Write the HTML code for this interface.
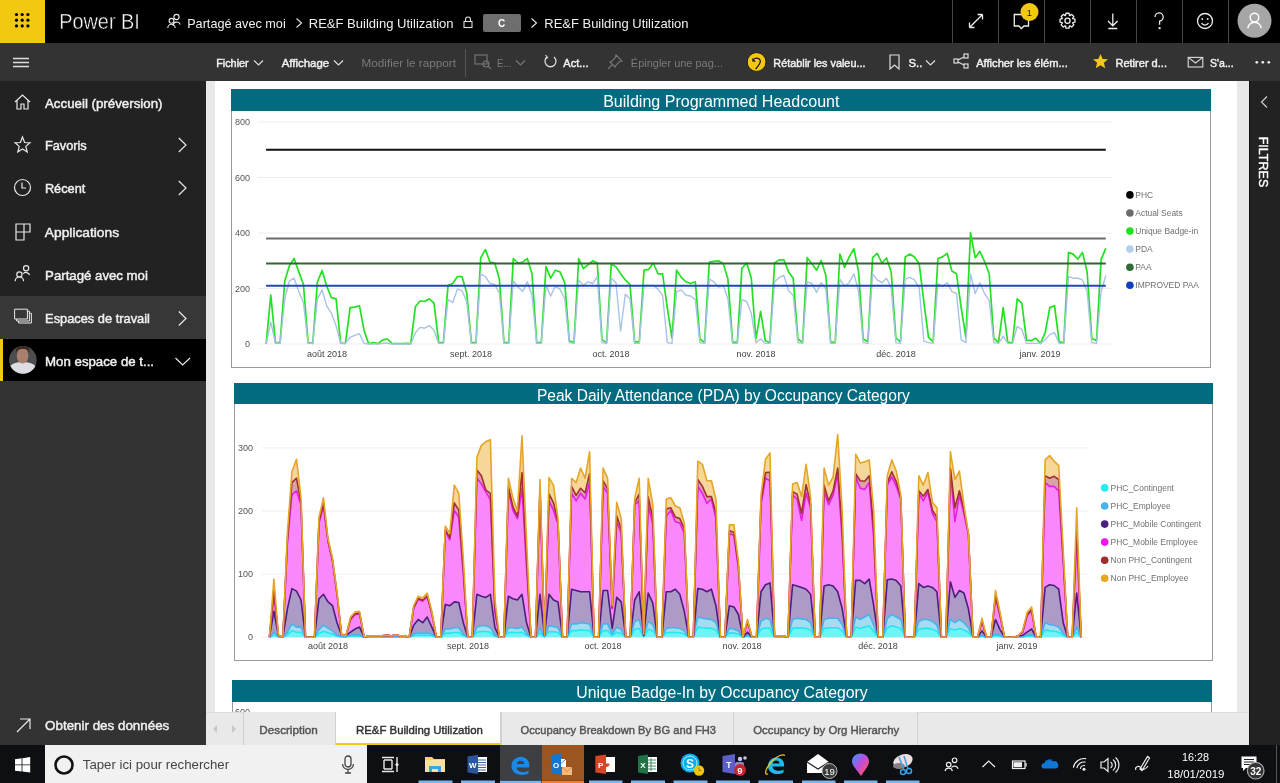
<!DOCTYPE html>
<html lang="fr"><head><meta charset="utf-8"><title>Power BI</title>
<style>
*{box-sizing:border-box;margin:0;padding:0}
html,body{width:1280px;height:783px;overflow:hidden;background:#fff;font-family:"Liberation Sans",sans-serif}
.abs{position:absolute}
#top{left:0;top:0;width:1280px;height:43px;background:#000}
#tb{left:0;top:43px;width:1280px;height:38px;background:#333333}
#nav{left:0;top:81px;width:206px;height:664px;background:#333333}
#navtop{left:0;top:81px;width:206px;height:215px;background:#222222}
.w{color:#fff;white-space:nowrap}
.t14{font-size:14px}
.ni{position:absolute;left:45px;font-size:13.5px;color:#f2f2f2;font-weight:bold;white-space:nowrap;letter-spacing:-0.1px}
.tbt{position:absolute;top:55px;font-size:12.5px;color:#f0f0f0;white-space:nowrap;font-weight:bold}
.tbd{color:#7a7a7a}
.sep{position:absolute;top:0;width:1px;height:43px;background:#474747}
svg text{font-family:"Liberation Sans",sans-serif}
.ax{font-size:9px;fill:#555}
.ax2{font-size:9px;fill:#444}
.leg{font-size:8.45px;fill:#707070}
.hdr{position:absolute;background:#026b80;color:#fff;font-size:16px;text-align:center;white-space:nowrap}
.tab{position:absolute;top:712px;height:33px;font-size:12.5px;font-weight:bold;color:#555;line-height:33px;text-align:center;border-right:1px solid #d0d0d0;background:#e9e9e9;white-space:nowrap}
</style></head><body>
<!-- top bar -->
<div id="top" class="abs"></div>
<div class="abs" style="left:0;top:0;width:45px;height:43px;background:#f2c811"></div>
<svg class="abs" style="left:0;top:0" width="45" height="43">
 <g fill="#000">
 <circle cx="16.5" cy="14.5" r="1.6"/><circle cx="22.2" cy="14.5" r="1.6"/><circle cx="27.9" cy="14.5" r="1.6"/>
 <circle cx="16.5" cy="20.2" r="1.6"/><circle cx="22.2" cy="20.2" r="1.6"/><circle cx="27.9" cy="20.2" r="1.6"/>
 <circle cx="16.5" cy="25.9" r="1.6"/><circle cx="22.2" cy="25.9" r="1.6"/><circle cx="27.9" cy="25.9" r="1.6"/>
 </g></svg>

<svg class="abs" style="left:166px;top:13px" width="16" height="16"><g fill="none" stroke="#eee" stroke-width="1.1"><circle cx="10.5" cy="4" r="2.6"/><path d="M7.2 13 a3.6 3.6 0 0 1 7 -1.5"/><circle cx="5.5" cy="7.8" r="2.4"/><path d="M1.8 15 a3.7 3.7 0 0 1 7.4 0"/></g></svg>

<svg class="abs" style="left:294px;top:17px" width="10" height="12"><path d="M2.5 1.5 L7.5 6 L2.5 10.5" fill="none" stroke="#ddd" stroke-width="1.2"/></svg>

<svg class="abs" style="left:462px;top:15px" width="12" height="14"><path d="M3.5 6.5 V4.5 a2.5 2.5 0 0 1 5 0 V6.5" fill="none" stroke="#ddd" stroke-width="1.1"/><rect x="2" y="6.5" width="8" height="6" fill="none" stroke="#ddd" stroke-width="1.1"/></svg>
<div class="abs" style="left:483px;top:13.5px;width:38px;height:18px;background:#6e6e6e;border-radius:2px"></div>
<svg class="abs" style="left:529px;top:17px" width="10" height="12"><path d="M2.5 1.5 L7.5 6 L2.5 10.5" fill="none" stroke="#ddd" stroke-width="1.2"/></svg>

<div class="sep" style="left:952px"></div><div class="sep" style="left:998px"></div><div class="sep" style="left:1044px"></div><div class="sep" style="left:1090px"></div><div class="sep" style="left:1136px"></div><div class="sep" style="left:1182px"></div><div class="sep" style="left:1228px"></div>
<svg class="abs" style="left:952px;top:0;will-change:transform" width="328" height="43">
 <g fill="none" stroke="#eee" stroke-width="1.3">
  <path d="M969.5 27.5 L982.5 14.5 M969.5 27.5 V22.5 M969.5 27.5 H974.5 M982.5 14.5 H977.5 M982.5 14.5 V19.5" transform="translate(-952 0)"/>
  <path d="M62.3 14.5 H76.5 V26 H72 L69.4 28.5 L66.8 26 H62.3 Z"/>
  <path d="M120.74 18.73 L122.95 19.19 L122.95 22.21 L120.74 22.67 L120.60 23.01 L121.83 24.90 L119.70 27.03 L117.81 25.80 L117.47 25.94 L117.01 28.15 L113.99 28.15 L113.53 25.94 L113.19 25.80 L111.30 27.03 L109.17 24.90 L110.40 23.01 L110.26 22.67 L108.05 22.21 L108.05 19.19 L110.26 18.73 L110.40 18.39 L109.17 16.50 L111.30 14.37 L113.19 15.60 L113.53 15.46 L113.99 13.25 L117.01 13.25 L117.47 15.46 L117.81 15.60 L119.70 14.37 L121.83 16.50 L120.60 18.39 Z" stroke-linejoin="round"/><circle cx="115.5" cy="20.7" r="2.6"/>
  <path d="M160.8 13.5 V25.5 M156 21 L160.8 25.8 L165.6 21 M156.3 28.5 H165.3"/>
  <path d="M203 17 a4.1 4.1 0 1 1 4.6 4.1 V24.8" /><circle cx="207.6" cy="28.2" r="0.5" fill="#eee"/>
  <circle cx="253" cy="21" r="7.5"/><path d="M249.5 23 a4 4 0 0 0 7 0"/>
 </g>
 <g fill="#eee"><circle cx="250.3" cy="19" r="0.9"/><circle cx="255.7" cy="19" r="0.9"/></g>
 <circle cx="77.5" cy="12" r="9" fill="#f2c811"/>
 <text x="77.5" y="15.5" text-anchor="middle" font-size="9.5" fill="#222">1</text>
 <circle cx="302.5" cy="20.7" r="17" fill="#a6a6a6"/>
 <g fill="none" stroke="#fff" stroke-width="1.4"><circle cx="302.5" cy="17.6" r="4.3"/><path d="M296 28.3 a6.5 6 0 0 1 13 0"/></g>
</svg>

<!-- toolbar -->
<div id="tb" class="abs"></div>
<svg class="abs" style="left:12px;top:55.5px" width="18" height="14"><g stroke="#ddd" stroke-width="1.3"><path d="M1 2.5 H17 M1 6.5 H17 M1 10.5 H17"/></g></svg>
<svg class="abs" style="left:253px;top:59px" width="11" height="8"><path d="M1 1.5 L5.5 6 L10 1.5" fill="none" stroke="#ddd" stroke-width="1.2"/></svg>
<svg class="abs" style="left:333px;top:59px" width="11" height="8"><path d="M1 1.5 L5.5 6 L10 1.5" fill="none" stroke="#ddd" stroke-width="1.2"/></svg>
<div class="abs" style="left:465px;top:49px;width:1px;height:28px;background:#555"></div>
<svg class="abs" style="left:474px;top:54px" width="18" height="16"><g fill="none" stroke="#777" stroke-width="1.1"><rect x="1" y="1" width="12" height="9"/><circle cx="12" cy="10" r="3"/><path d="M14 12 L17 15"/></g></svg>
<svg class="abs" style="left:515px;top:59px" width="11" height="8"><path d="M1 1.5 L5.5 6 L10 1.5" fill="none" stroke="#777" stroke-width="1.2"/></svg>
<svg class="abs" style="left:543px;top:54px" width="15" height="15"><path d="M4 3 A5.5 5.5 0 1 0 11 3" fill="none" stroke="#ddd" stroke-width="1.3"/><path d="M2.5 1 L4.5 3.5 L2 5" fill="none" stroke="#ddd" stroke-width="1.2"/></svg>
<svg class="abs" style="left:607px;top:53px" width="17" height="17"><g fill="none" stroke="#777" stroke-width="1.1"><path d="M9 2 L15 8 L12 9 L9 12 L8 14 L3 9 L5 8 L8 5 Z"/><path d="M5.5 11.5 L1 16"/></g></svg>
<svg class="abs" style="left:746px;top:52px" width="21" height="21"><circle cx="10.6" cy="10" r="9.4" fill="#f2c811" stroke="#151515" stroke-width="0.9"/><path d="M7 7.6 C9.5 5.2 13.6 5.6 14.3 8.6 C14.9 11.2 12.3 14 9.6 17" fill="none" stroke="#1a1a1a" stroke-width="1.3"/><path d="M6.2 6 L6.4 9.8 L10 9.4 Z" fill="#1a1a1a"/></svg>
<svg class="abs" style="left:888px;top:54px" width="13" height="16"><path d="M2 1 H11 V15 L6.5 11 L2 15 Z" fill="none" stroke="#ddd" stroke-width="1.2"/></svg>
<svg class="abs" style="left:925px;top:59px" width="11" height="8"><path d="M1 1.5 L5.5 6 L10 1.5" fill="none" stroke="#ddd" stroke-width="1.2"/></svg>
<svg class="abs" style="left:953px;top:53px" width="17" height="17"><g fill="none" stroke="#ddd" stroke-width="1.2"><rect x="1" y="6" width="4" height="4"/><rect x="11" y="1" width="4" height="4"/><rect x="11" y="11" width="4" height="4"/><path d="M5 7 L11 4 M5 9 L11 12"/></g></svg>
<svg class="abs" style="left:1092px;top:53px" width="17" height="17"><path d="M8.5 1 L10.7 6 L16 6.3 L11.9 9.8 L13.2 15.2 L8.5 12.3 L3.8 15.2 L5.1 9.8 L1 6.3 L6.3 6 Z" fill="#f2c811"/></svg>
<svg class="abs" style="left:1187px;top:56px" width="17" height="13"><g fill="none" stroke="#ddd" stroke-width="1.1"><rect x="1.2" y="1.4" width="14.6" height="9.6"/><path d="M1.2 1.4 L8.5 7 L15.8 1.4"/></g></svg>
<svg class="abs" style="left:1254px;top:60px" width="18" height="5"><g fill="#eee"><circle cx="2.8" cy="2.3" r="1.35"/><circle cx="8.8" cy="2.3" r="1.35"/><circle cx="14.8" cy="2.3" r="1.35"/></g></svg>

<!-- left nav -->
<div id="nav" class="abs"></div>
<div id="navtop" class="abs"></div>
<div class="abs" style="left:0;top:296px;width:206px;height:43px;background:#373737"></div>
<div class="abs" style="left:0;top:339px;width:206px;height:42px;background:#000"></div>
<div class="abs" style="left:0;top:339px;width:3px;height:42px;background:#f2c811"></div>
<svg class="abs" style="left:0;top:81px" width="206" height="664">
 <g fill="none" stroke="#e8e8e8" stroke-width="1.2">
  <path d="M15 21 L22.5 14 L30 21 M17 19.5 V28 H21 V23 H24 V28 H28 V19.5"/>
  <path d="M22.5 56 L24.6 61.5 L30 61.8 L25.8 65.4 L27.2 71 L22.5 68 L17.8 71 L19.2 65.4 L15 61.8 L20.4 61.5 Z"/>
  <circle cx="22.5" cy="106.5" r="8"/><path d="M22 101.5 V107 H26"/>
  <path d="M16 143 H24 V159 H16 Z M16 151 H24 M24 143 H30 V151 H24"/>
  <circle cx="26.1" cy="187.2" r="2.6"/><path d="M23.2 192.6 a3.8 3.8 0 0 1 6.4 1.6"/><circle cx="19.4" cy="193.4" r="2.6"/><path d="M15.2 200.2 a4.2 4.2 0 0 1 8.4 0"/>
  <path d="M14.6 228.2 H27.4 V238 H14.6 Z M16.6 238 V240 H29.4 V230.2 H27.4 M18.6 240 V242 H31.4 V232.2 H29.4" stroke-width="1"/>
  <path d="M178.8 57 L186 64 L178.8 71"/>
  <path d="M178.8 100 L186 107 L178.8 114"/>
  <path d="M178.8 230.5 L186 237.5 L178.8 244.5"/>
  <path d="M175.5 277 L182.7 284 L190 277"/>
  <path d="M17 651 L30 638 M20 638 H30 V648"/>
 </g>
 <defs><clipPath id="avc"><circle cx="22.9" cy="278.9" r="13.8"/></clipPath></defs>
 <g clip-path="url(#avc)">
  <rect x="8" y="264" width="30" height="30" fill="#4d4d4f"/>
  <path d="M8 294 V287 C12 282 17 281 22.5 281 C28 281 33 282 38 287 V294 Z" fill="#dcdce2"/>
  <ellipse cx="22.6" cy="274.5" rx="5.8" ry="8" fill="#a8806d"/>
  <path d="M16 272 C15.5 266 19 264.5 23 264.5 C27 264.5 30 266.5 29.5 272 C28 268.5 26 268 23 268 C20 268 17.5 268.5 16 272 Z" fill="#3b2a22"/>
 </g>
</svg>

<!-- canvas -->
<div class="abs" style="left:206px;top:81px;width:1044px;height:631px;background:#e8e8e8"></div>
<div class="abs" style="left:215px;top:81px;width:1022px;height:631px;background:#fff"></div>
<!-- chart 1 -->
<div class="abs" style="left:231px;top:89px;width:980px;height:278.5px;border:1px solid #9a9a9a;background:#fff"></div>
<div class="hdr" style="left:231px;top:89px;width:980px;height:22px"></div>
<!-- chart 2 -->
<div class="abs" style="left:234px;top:383px;width:978.5px;height:278px;border:1px solid #9a9a9a;background:#fff"></div>
<div class="hdr" style="left:234px;top:383px;width:978.5px;height:21px"></div>
<!-- chart 3 -->
<div class="abs" style="left:232px;top:680px;width:980px;height:40px;border:1px solid #9a9a9a;background:#fff"></div>
<div class="hdr" style="left:232px;top:680px;width:980px;height:21.6px"></div>

<svg class="abs" style="left:0;top:0;will-change:transform" width="1280" height="712">
<line x1="258" y1="122" x2="1112" y2="122" stroke="#eeeeee" stroke-width="1"/>
<text x="250" y="125.2" text-anchor="end" class="ax">800</text>
<line x1="258" y1="177.5" x2="1112" y2="177.5" stroke="#eeeeee" stroke-width="1"/>
<text x="250" y="180.7" text-anchor="end" class="ax">600</text>
<line x1="258" y1="233" x2="1112" y2="233" stroke="#eeeeee" stroke-width="1"/>
<text x="250" y="236.2" text-anchor="end" class="ax">400</text>
<line x1="258" y1="288.5" x2="1112" y2="288.5" stroke="#eeeeee" stroke-width="1"/>
<text x="250" y="291.7" text-anchor="end" class="ax">200</text>
<line x1="258" y1="344" x2="1112" y2="344" stroke="#eeeeee" stroke-width="1"/>
<text x="250" y="347.2" text-anchor="end" class="ax">0</text>
<line x1="266.1" y1="149.7" x2="1105.8" y2="149.7" stroke="#111" stroke-width="2"/>
<line x1="266.1" y1="238.6" x2="1105.8" y2="238.6" stroke="#6a6a6a" stroke-width="2"/>
<polyline points="266.1,344 270.8,295.2 275.4,342.6 280.1,342.6 284.8,280.7 289.4,265.7 294.1,258.5 298.8,271.9 303.4,284.3 308.1,342.6 312.8,343.4 317.4,281.8 322.1,270.5 326.7,286 331.4,297.7 336.1,298.8 340.7,343.2 345.4,343.4 350.1,307.6 354.7,307.1 359.4,305.7 364.1,330.7 368.7,343.7 373.4,342.6 378.1,343.7 382.7,339.8 387.4,339 392.1,343.7 396.7,343.7 401.4,343.7 406.1,343.4 410.7,343.7 415.4,306.8 420,301 424.7,301.5 429.4,298.8 434,303.2 438.7,342.6 443.4,342.6 448,285.4 452.7,283.5 457.4,276.6 462,276.6 466.7,292.7 471.4,342.6 476,342.6 480.7,257.7 485.4,249.6 490,262.1 494.7,263 499.4,279.1 504,342.6 508.7,342.6 513.3,258.5 518,263 522.7,262.1 527.3,258.5 532,273.8 536.7,342.6 541.3,342.6 546,266.6 550.7,278.2 555.3,270.2 560,271.9 564.7,282.7 569.3,340.7 574,342.6 578.7,258.5 583.3,268.5 588,264.9 592.7,260.8 597.3,263 602,339.6 606.6,342.6 611.3,263.8 616,266.9 620.6,273.8 625.3,279.9 630,284.6 634.6,341.8 639.3,341.8 644,270.2 648.6,269.4 653.3,263 658,273.8 662.6,273.8 667.3,307.9 672,338.2 676.6,270.2 681.3,277.4 686,281.8 690.6,283.5 695.3,281.8 699.9,339 704.6,342.6 709.3,262.1 713.9,261.3 718.6,260.8 723.3,263.8 727.9,279.1 732.6,341.8 737.3,342.6 741.9,268.5 746.6,262.7 751.3,278.2 755.9,339 760.6,311.3 765.3,340.7 769.9,342.6 774.6,263 779.2,259.9 783.9,259.9 788.6,271.9 793.2,278.2 797.9,339 802.6,342.6 807.2,257.7 811.9,263.8 816.6,270.2 821.2,260.5 825.9,275.5 830.6,341.8 835.2,342.6 839.9,254.1 844.6,267.4 849.2,256.9 853.9,248.8 858.6,271.9 863.2,339 867.9,341.8 872.6,257.7 877.2,253.3 881.9,263 886.5,258 891.2,271.9 895.9,338.2 900.5,341.8 905.2,256.9 909.9,254.1 914.5,256.9 919.2,263.8 923.9,302.4 928.5,337.3 933.2,341.8 937.9,258.5 942.5,256.9 947.2,253.3 951.9,271 956.5,273.8 961.2,307.9 965.9,337.3 970.5,232.7 975.2,257.7 979.8,251.3 984.5,261.3 989.2,273.8 993.8,338.2 998.5,342.6 1003.2,307.6 1007.8,342.6 1012.5,342.6 1017.2,298.8 1021.8,303.2 1026.5,340.1 1031.2,340.7 1035.8,338.2 1040.5,343.4 1045.2,332.6 1049.8,307.6 1054.5,305.7 1059.2,341.8 1063.8,342.6 1068.5,252.4 1073.1,254.1 1077.8,259.1 1082.5,252.4 1087.1,271.9 1091.8,338.2 1096.5,340.7 1101.1,259.4 1105.8,248.3" fill="none" stroke="#22e022" stroke-width="1.7" stroke-linejoin="round"/>
<polyline points="266.1,344 270.8,322.1 275.4,343.2 280.1,343.2 284.8,298.8 289.4,281 294.1,278.2 298.8,291.6 303.4,302.4 308.1,343.4 312.8,343.4 317.4,298.8 322.1,289.9 326.7,306 331.4,313.2 336.1,325.7 340.7,343.4 345.4,343.4 350.1,337.3 354.7,335.4 359.4,333.7 364.1,343.4 368.7,344 373.4,344 378.1,344 382.7,343.4 387.4,343.2 392.1,344 396.7,344 401.4,344 406.1,344 410.7,344 415.4,332.9 420,327.4 424.7,328.2 429.4,325.7 434,330.1 438.7,343.4 443.4,343.4 448,299.6 452.7,302.4 457.4,289.1 462,290.7 466.7,301.5 471.4,343.4 476,343.4 480.7,273.8 485.4,276.6 490,283.5 494.7,284.3 499.4,293.5 504,343.4 508.7,343.4 513.3,281 518,287.1 522.7,291.6 527.3,281.8 532,295.2 536.7,343.4 541.3,343.4 546,285.4 550.7,296 555.3,286.3 560,289.1 564.7,298.8 569.3,342.6 574,343.4 578.7,279.9 583.3,285.4 588,281.8 592.7,283.5 597.3,276.6 602,342.6 606.6,343.4 611.3,278.2 616,282.7 620.6,331 625.3,294.3 630,298.8 634.6,343.4 639.3,343.4 644,285.4 648.6,285.4 653.3,285.4 658,289.1 662.6,295.2 667.3,342.6 672,343.4 676.6,291.6 681.3,289.9 686,295.2 690.6,296 695.3,299.6 699.9,342.6 704.6,343.4 709.3,279.1 713.9,281.8 718.6,287.1 723.3,285.4 727.9,298.8 732.6,343.4 737.3,343.4 741.9,299.6 746.6,301.5 751.3,313.2 755.9,342.6 760.6,339 765.3,343.4 769.9,343.4 774.6,281.8 779.2,277.4 783.9,275.5 788.6,290.7 793.2,295.2 797.9,342.6 802.6,343.4 807.2,281.8 811.9,283.5 816.6,292.4 821.2,282.7 825.9,289.1 830.6,343.4 835.2,343.4 839.9,279.1 844.6,286.3 849.2,282.7 853.9,273.8 858.6,291.6 863.2,342.6 867.9,343.4 872.6,273.8 877.2,279.9 881.9,282.7 886.5,278.2 891.2,287.9 895.9,342.6 900.5,343.4 905.2,279.1 909.9,277.4 914.5,279.9 919.2,287.9 923.9,341.2 928.5,342.6 933.2,343.4 937.9,283.5 942.5,286.3 947.2,282.7 951.9,291.6 956.5,293.5 961.2,339.8 965.9,342.6 970.5,273.8 975.2,293.5 979.8,282.7 984.5,293.5 989.2,300.4 993.8,342.6 998.5,343.4 1003.2,336.2 1007.8,343.4 1012.5,343.4 1017.2,326.5 1021.8,329.3 1026.5,343.4 1031.2,343.4 1035.8,343.4 1040.5,343.4 1045.2,339.8 1049.8,334.6 1054.5,332.6 1059.2,343.4 1063.8,343.4 1068.5,276.6 1073.1,278.2 1077.8,278.2 1082.5,279.9 1087.1,291.6 1091.8,342.6 1096.5,343.4 1101.1,291.6 1105.8,275.5" fill="none" stroke="#a9c3e6" stroke-width="1.4" stroke-linejoin="round"/>
<line x1="266.1" y1="263.5" x2="1105.8" y2="263.5" stroke="#35603a" stroke-width="2"/>
<line x1="266.1" y1="285.7" x2="1105.8" y2="285.7" stroke="#2347b0" stroke-width="2"/>
<text x="327" y="356.6" text-anchor="middle" class="ax2">août 2018</text>
<text x="471" y="356.6" text-anchor="middle" class="ax2">sept. 2018</text>
<text x="611" y="356.6" text-anchor="middle" class="ax2">oct. 2018</text>
<text x="756" y="356.6" text-anchor="middle" class="ax2">nov. 2018</text>
<text x="896" y="356.6" text-anchor="middle" class="ax2">déc. 2018</text>
<text x="1040" y="356.6" text-anchor="middle" class="ax2">janv. 2019</text>
<circle cx="1129.9" cy="194.9" r="3.8" fill="#000"/>
<text x="1135.3" y="197.9" class="leg">PHC</text>
<circle cx="1129.9" cy="213" r="3.8" fill="#6b6b6b"/>
<text x="1135.3" y="216" class="leg">Actual Seats</text>
<circle cx="1129.9" cy="231.1" r="3.8" fill="#1fe21f"/>
<text x="1135.3" y="234.1" class="leg">Unique Badge-in</text>
<circle cx="1129.9" cy="249.1" r="3.8" fill="#b4cfe8"/>
<text x="1135.3" y="252.1" class="leg">PDA</text>
<circle cx="1129.9" cy="267.2" r="3.8" fill="#2f6b35"/>
<text x="1135.3" y="270.2" class="leg">PAA</text>
<circle cx="1129.9" cy="285.3" r="3.8" fill="#1040c0"/>
<text x="1135.3" y="288.3" class="leg">IMPROVED PAA</text>
<line x1="262" y1="447.9" x2="1088" y2="447.9" stroke="#eeeeee" stroke-width="1"/>
<text x="253" y="451.1" text-anchor="end" class="ax">300</text>
<line x1="262" y1="511" x2="1088" y2="511" stroke="#eeeeee" stroke-width="1"/>
<text x="253" y="514.2" text-anchor="end" class="ax">200</text>
<line x1="262" y1="574.1" x2="1088" y2="574.1" stroke="#eeeeee" stroke-width="1"/>
<text x="253" y="577.3" text-anchor="end" class="ax">100</text>
<line x1="262" y1="637.2" x2="1088" y2="637.2" stroke="#eeeeee" stroke-width="1"/>
<text x="253" y="640.4" text-anchor="end" class="ax">0</text>
<polygon points="269.4,637.2 273.9,634.7 278.4,636.9 282.9,637.2 287.4,634.7 291.9,630.6 296.5,632.2 301,632.2 305.5,637.2 310,637.2 314.5,637.2 319,633.4 323.5,631.2 328,632.8 332.5,634 337,636.3 341.6,636.9 346.1,636.9 350.6,636.3 355.1,635.9 359.6,635.9 364.1,637.2 368.6,637 373.1,637 377.6,637 382.1,637 386.7,636.9 391.2,637 395.7,636.8 400.2,637 404.7,637 409.2,637.2 413.7,635.6 418.2,635 422.7,635.3 427.2,635 431.8,635.6 436.3,637.2 440.8,637.2 445.3,633.1 449.8,633.1 454.3,632.5 458.8,632.5 463.3,635.6 467.8,637.2 472.3,637.2 476.9,632.2 481.4,631.5 485.9,631.5 490.4,632.5 494.9,636.3 499.4,637.2 503.9,637.2 508.4,632.5 512.9,632.5 517.4,632.8 522,632.2 526.5,635.3 531,637.2 535.5,637.2 540,632.8 544.5,636.9 549,631.5 553.5,631.8 558,632.5 562.5,637.2 567.1,637.2 571.6,630.6 576.1,630.6 580.6,629.9 585.1,630.3 589.6,630.6 594.1,637.2 598.6,637.2 603.1,630.6 607.6,630.6 612.2,635.6 616.7,632.2 621.2,633.4 625.7,637.2 630.2,637.2 634.7,629.3 639.2,628.4 643.7,636.9 648.2,629.3 652.8,630.9 657.3,637.2 661.8,637.2 666.3,632.8 670.8,632.5 675.3,632.5 679.8,632.8 684.3,634 688.8,637.2 693.3,637.2 697.8,627.1 702.4,627.7 706.9,628.1 711.4,628.4 715.9,629.9 720.4,637.2 724.9,637.2 729.4,632.8 733.9,633.1 738.4,634 742.9,637.2 747.5,636.3 752,637.2 756.5,637.2 761,629.3 765.5,627.7 770,628.4 774.5,637 779,637 783.5,637 788,637.2 792.6,628.4 797.1,627.7 801.6,628.1 806.1,628.4 810.6,629.9 815.1,637.2 819.6,637.2 824.1,628.4 828.6,627.7 833.1,627.7 837.7,627.7 842.2,630.9 846.7,637.2 851.2,637.2 855.7,627.1 860.2,628.4 864.7,627.1 869.2,625.8 873.7,631.2 878.2,637.2 882.8,637.2 887.3,627.7 891.8,625.8 896.3,627.1 900.8,628.4 905.3,637.2 909.8,637.2 914.3,637.2 918.8,629.3 923.3,628.4 927.9,628.4 932.4,629.3 936.9,631.2 941.4,637.2 945.9,637.2 950.4,628.4 954.9,629.9 959.4,628.4 963.9,629.9 968.4,632.5 973,637.2 977.5,637.2 982,636.3 986.5,637.2 991,637.2 995.5,635.6 1000,636.3 1004.5,637.2 1009,637.2 1013.5,637.2 1018.1,637 1022.6,636.9 1027.1,636.3 1031.6,635.9 1036.1,637.2 1040.6,637.2 1045.1,629.9 1049.6,630.9 1054.1,631.2 1058.7,632.2 1063.2,635.3 1067.7,637.2 1072.2,637.2 1076.7,632.2 1081.2,637.2 1081.2,637.2 269.4,637.2" fill="#6ff3f6" stroke="none"/>
<polygon points="269.4,637.2 273.9,632.2 278.4,636.6 282.9,637.2 287.4,632.2 291.9,623.9 296.5,627.1 301,627.1 305.5,637.2 310,637.2 314.5,637.2 319,629.6 323.5,625.2 328,628.4 332.5,630.9 337,635.3 341.6,636.6 346.1,636.6 350.6,635.3 355.1,634.7 359.6,634.7 364.1,637.2 368.6,636.8 373.1,636.8 377.6,636.8 382.1,636.8 386.7,636.6 391.2,636.8 395.7,636.4 400.2,636.8 404.7,636.8 409.2,637.2 413.7,634 418.2,632.8 422.7,633.4 427.2,632.8 431.8,634 436.3,637.2 440.8,637.2 445.3,629 449.8,629 454.3,627.7 458.8,627.7 463.3,634 467.8,637.2 472.3,637.2 476.9,627.1 481.4,625.8 485.9,625.8 490.4,627.7 494.9,635.3 499.4,637.2 503.9,637.2 508.4,627.7 512.9,627.7 517.4,628.4 522,627.1 526.5,633.4 531,637.2 535.5,637.2 540,628.4 544.5,636.6 549,625.8 553.5,626.5 558,627.7 562.5,637.2 567.1,637.2 571.6,623.9 576.1,623.9 580.6,622.7 585.1,623.3 589.6,623.9 594.1,637.2 598.6,637.2 603.1,623.9 607.6,623.9 612.2,634 616.7,627.1 621.2,629.6 625.7,637.2 630.2,637.2 634.7,621.4 639.2,619.5 643.7,636.6 648.2,621.4 652.8,624.6 657.3,637.2 661.8,637.2 666.3,628.4 670.8,627.7 675.3,627.7 679.8,628.4 684.3,630.9 688.8,637.2 693.3,637.2 697.8,617 702.4,618.3 706.9,618.9 711.4,619.5 715.9,622.7 720.4,637.2 724.9,637.2 729.4,628.4 733.9,629 738.4,630.9 742.9,637.2 747.5,635.3 752,637.2 756.5,637.2 761,621.4 765.5,618.3 770,619.5 774.5,636.8 779,636.8 783.5,636.8 788,637.2 792.6,619.5 797.1,618.3 801.6,618.9 806.1,619.5 810.6,622.7 815.1,637.2 819.6,637.2 824.1,619.5 828.6,618.3 833.1,618.3 837.7,618.3 842.2,624.6 846.7,637.2 851.2,637.2 855.7,617 860.2,619.5 864.7,617 869.2,614.5 873.7,625.2 878.2,637.2 882.8,637.2 887.3,618.3 891.8,614.5 896.3,617 900.8,619.5 905.3,637.2 909.8,637.2 914.3,637.2 918.8,621.4 923.3,619.5 927.9,619.5 932.4,621.4 936.9,625.2 941.4,637.2 945.9,637.2 950.4,619.5 954.9,622.7 959.4,619.5 963.9,622.7 968.4,627.7 973,637.2 977.5,637.2 982,635.3 986.5,637.2 991,637.2 995.5,634 1000,635.3 1004.5,637.2 1009,637.2 1013.5,637.2 1018.1,636.8 1022.6,636.6 1027.1,635.3 1031.6,634.7 1036.1,637.2 1040.6,637.2 1045.1,622.7 1049.6,624.6 1054.1,625.2 1058.7,627.1 1063.2,633.4 1067.7,637.2 1072.2,637.2 1076.7,627.1 1081.2,637.2 1081.2,637.2 1076.7,632.2 1072.2,637.2 1067.7,637.2 1063.2,635.3 1058.7,632.2 1054.1,631.2 1049.6,630.9 1045.1,629.9 1040.6,637.2 1036.1,637.2 1031.6,635.9 1027.1,636.3 1022.6,636.9 1018.1,637 1013.5,637.2 1009,637.2 1004.5,637.2 1000,636.3 995.5,635.6 991,637.2 986.5,637.2 982,636.3 977.5,637.2 973,637.2 968.4,632.5 963.9,629.9 959.4,628.4 954.9,629.9 950.4,628.4 945.9,637.2 941.4,637.2 936.9,631.2 932.4,629.3 927.9,628.4 923.3,628.4 918.8,629.3 914.3,637.2 909.8,637.2 905.3,637.2 900.8,628.4 896.3,627.1 891.8,625.8 887.3,627.7 882.8,637.2 878.2,637.2 873.7,631.2 869.2,625.8 864.7,627.1 860.2,628.4 855.7,627.1 851.2,637.2 846.7,637.2 842.2,630.9 837.7,627.7 833.1,627.7 828.6,627.7 824.1,628.4 819.6,637.2 815.1,637.2 810.6,629.9 806.1,628.4 801.6,628.1 797.1,627.7 792.6,628.4 788,637.2 783.5,637 779,637 774.5,637 770,628.4 765.5,627.7 761,629.3 756.5,637.2 752,637.2 747.5,636.3 742.9,637.2 738.4,634 733.9,633.1 729.4,632.8 724.9,637.2 720.4,637.2 715.9,629.9 711.4,628.4 706.9,628.1 702.4,627.7 697.8,627.1 693.3,637.2 688.8,637.2 684.3,634 679.8,632.8 675.3,632.5 670.8,632.5 666.3,632.8 661.8,637.2 657.3,637.2 652.8,630.9 648.2,629.3 643.7,636.9 639.2,628.4 634.7,629.3 630.2,637.2 625.7,637.2 621.2,633.4 616.7,632.2 612.2,635.6 607.6,630.6 603.1,630.6 598.6,637.2 594.1,637.2 589.6,630.6 585.1,630.3 580.6,629.9 576.1,630.6 571.6,630.6 567.1,637.2 562.5,637.2 558,632.5 553.5,631.8 549,631.5 544.5,636.9 540,632.8 535.5,637.2 531,637.2 526.5,635.3 522,632.2 517.4,632.8 512.9,632.5 508.4,632.5 503.9,637.2 499.4,637.2 494.9,636.3 490.4,632.5 485.9,631.5 481.4,631.5 476.9,632.2 472.3,637.2 467.8,637.2 463.3,635.6 458.8,632.5 454.3,632.5 449.8,633.1 445.3,633.1 440.8,637.2 436.3,637.2 431.8,635.6 427.2,635 422.7,635.3 418.2,635 413.7,635.6 409.2,637.2 404.7,637 400.2,637 395.7,636.8 391.2,637 386.7,636.9 382.1,637 377.6,637 373.1,637 368.6,637 364.1,637.2 359.6,635.9 355.1,635.9 350.6,636.3 346.1,636.9 341.6,636.9 337,636.3 332.5,634 328,632.8 323.5,631.2 319,633.4 314.5,637.2 310,637.2 305.5,637.2 301,632.2 296.5,632.2 291.9,630.6 287.4,634.7 282.9,637.2 278.4,636.9 273.9,634.7 269.4,637.2" fill="#a6dcf2" stroke="none"/>
<polygon points="269.4,637.2 273.9,611.3 278.4,635.3 282.9,637.2 287.4,608.8 291.9,588.6 296.5,591.1 301,600 305.5,637.2 310,637.2 314.5,637.2 319,598.7 323.5,594.3 328,601.9 332.5,605.7 337,622.7 341.6,635.3 346.1,635.3 350.6,632.2 355.1,629 359.6,627.1 364.1,637.2 368.6,635.9 373.1,635.9 377.6,635.9 382.1,635.9 386.7,635.3 391.2,635.9 395.7,634.7 400.2,635.9 404.7,635.9 409.2,637.2 413.7,625.2 418.2,619.5 422.7,622.7 427.2,617 431.8,627.1 436.3,637.2 440.8,637.2 445.3,604.4 449.8,605.7 454.3,601.9 458.8,602.5 463.3,622.7 467.8,637.2 472.3,637.2 476.9,594.3 481.4,596.2 485.9,597.4 490.4,594.3 494.9,627.7 499.4,637.2 503.9,637.2 508.4,596.2 512.9,598.7 517.4,600 522,594.3 526.5,622.7 531,637.2 535.5,637.2 540,594.3 544.5,635.3 549,594.3 553.5,600 558,601.9 562.5,637.2 567.1,637.2 571.6,589.2 576.1,590.5 580.6,591.8 585.1,591.8 589.6,591.8 594.1,637.2 598.6,637.2 603.1,590.5 607.6,590.5 612.2,628.4 616.7,597.4 621.2,601.9 625.7,637.2 630.2,637.2 634.7,600 639.2,591.8 643.7,635.3 648.2,593 652.8,603.1 657.3,637.2 661.8,637.2 666.3,591.8 670.8,591.8 675.3,589.2 679.8,594.3 684.3,611.3 688.8,637.2 693.3,637.2 697.8,588.6 702.4,589.2 706.9,591.8 711.4,589.2 715.9,605.7 720.4,637.2 724.9,637.2 729.4,605.7 733.9,606.9 738.4,614.5 742.9,637.2 747.5,632.2 752,637.2 756.5,637.2 761,591.8 765.5,584.8 770,582.9 774.5,635.9 779,635.9 783.5,635.9 788,637.2 792.6,584.8 797.1,586.1 801.6,587.4 806.1,589.2 810.6,594.3 815.1,637.2 819.6,637.2 824.1,586.1 828.6,584.8 833.1,586.1 837.7,591.8 842.2,608.8 846.7,637.2 851.2,637.2 855.7,580.4 860.2,580.4 864.7,583.6 869.2,579.1 873.7,605.7 878.2,637.2 882.8,637.2 887.3,579.8 891.8,579.1 896.3,580.4 900.8,586.1 905.3,637.2 909.8,637.2 914.3,637.2 918.8,583.6 923.3,587.4 927.9,586.1 932.4,587.4 936.9,591.8 941.4,637.2 945.9,637.2 950.4,581.7 954.9,597.4 959.4,590.5 963.9,593 968.4,608.8 973,637.2 977.5,637.2 982,630.9 986.5,637.2 991,637.2 995.5,619.5 1000,629.6 1004.5,637.2 1009,637.2 1013.5,637.2 1018.1,635.9 1022.6,635.3 1027.1,632.2 1031.6,629 1036.1,637.2 1040.6,637.2 1045.1,587.4 1049.6,584.8 1054.1,585.5 1058.7,589.2 1063.2,622.7 1067.7,637.2 1072.2,637.2 1076.7,593 1081.2,637.2 1081.2,637.2 1076.7,627.1 1072.2,637.2 1067.7,637.2 1063.2,633.4 1058.7,627.1 1054.1,625.2 1049.6,624.6 1045.1,622.7 1040.6,637.2 1036.1,637.2 1031.6,634.7 1027.1,635.3 1022.6,636.6 1018.1,636.8 1013.5,637.2 1009,637.2 1004.5,637.2 1000,635.3 995.5,634 991,637.2 986.5,637.2 982,635.3 977.5,637.2 973,637.2 968.4,627.7 963.9,622.7 959.4,619.5 954.9,622.7 950.4,619.5 945.9,637.2 941.4,637.2 936.9,625.2 932.4,621.4 927.9,619.5 923.3,619.5 918.8,621.4 914.3,637.2 909.8,637.2 905.3,637.2 900.8,619.5 896.3,617 891.8,614.5 887.3,618.3 882.8,637.2 878.2,637.2 873.7,625.2 869.2,614.5 864.7,617 860.2,619.5 855.7,617 851.2,637.2 846.7,637.2 842.2,624.6 837.7,618.3 833.1,618.3 828.6,618.3 824.1,619.5 819.6,637.2 815.1,637.2 810.6,622.7 806.1,619.5 801.6,618.9 797.1,618.3 792.6,619.5 788,637.2 783.5,636.8 779,636.8 774.5,636.8 770,619.5 765.5,618.3 761,621.4 756.5,637.2 752,637.2 747.5,635.3 742.9,637.2 738.4,630.9 733.9,629 729.4,628.4 724.9,637.2 720.4,637.2 715.9,622.7 711.4,619.5 706.9,618.9 702.4,618.3 697.8,617 693.3,637.2 688.8,637.2 684.3,630.9 679.8,628.4 675.3,627.7 670.8,627.7 666.3,628.4 661.8,637.2 657.3,637.2 652.8,624.6 648.2,621.4 643.7,636.6 639.2,619.5 634.7,621.4 630.2,637.2 625.7,637.2 621.2,629.6 616.7,627.1 612.2,634 607.6,623.9 603.1,623.9 598.6,637.2 594.1,637.2 589.6,623.9 585.1,623.3 580.6,622.7 576.1,623.9 571.6,623.9 567.1,637.2 562.5,637.2 558,627.7 553.5,626.5 549,625.8 544.5,636.6 540,628.4 535.5,637.2 531,637.2 526.5,633.4 522,627.1 517.4,628.4 512.9,627.7 508.4,627.7 503.9,637.2 499.4,637.2 494.9,635.3 490.4,627.7 485.9,625.8 481.4,625.8 476.9,627.1 472.3,637.2 467.8,637.2 463.3,634 458.8,627.7 454.3,627.7 449.8,629 445.3,629 440.8,637.2 436.3,637.2 431.8,634 427.2,632.8 422.7,633.4 418.2,632.8 413.7,634 409.2,637.2 404.7,636.8 400.2,636.8 395.7,636.4 391.2,636.8 386.7,636.6 382.1,636.8 377.6,636.8 373.1,636.8 368.6,636.8 364.1,637.2 359.6,634.7 355.1,634.7 350.6,635.3 346.1,636.6 341.6,636.6 337,635.3 332.5,630.9 328,628.4 323.5,625.2 319,629.6 314.5,637.2 310,637.2 305.5,637.2 301,627.1 296.5,627.1 291.9,623.9 287.4,632.2 282.9,637.2 278.4,636.6 273.9,632.2 269.4,637.2" fill="#ad9bc7" stroke="none"/>
<polygon points="269.4,637.2 273.9,594.9 278.4,635.3 282.9,637.2 287.4,542.6 291.9,494.6 296.5,490.8 301,504.7 305.5,637.2 310,637.2 314.5,637.2 319,523 323.5,506 328,541.3 332.5,560.8 337,594.3 341.6,635.3 346.1,635.3 350.6,619.5 355.1,614.5 359.6,613.9 364.1,637.2 368.6,635.9 373.1,635.9 377.6,635.9 382.1,635.9 386.7,635.3 391.2,635.9 395.7,634.7 400.2,635.9 404.7,635.9 409.2,637.2 413.7,608.2 418.2,599.3 422.7,601.2 427.2,596.8 431.8,613.2 436.3,637.2 440.8,637.2 445.3,531.2 449.8,540 454.3,510.4 458.8,517.3 463.3,574.1 467.8,637.2 472.3,637.2 476.9,478.2 481.4,483.9 485.9,492.1 490.4,499.6 494.9,612 499.4,637.2 503.9,637.2 508.4,490.8 512.9,510.4 517.4,518.6 522,488.3 526.5,566.5 531,637.2 535.5,637.2 540,490.8 544.5,635.3 549,500.9 553.5,510.4 558,524.3 562.5,637.2 567.1,637.2 571.6,493.3 576.1,500.9 580.6,493.3 585.1,499 589.6,482.6 594.1,637.2 598.6,637.2 603.1,486.4 607.6,493.3 612.2,608.8 616.7,521.7 621.2,533.1 625.7,637.2 630.2,637.2 634.7,504.7 639.2,500.9 643.7,634 648.2,504.7 652.8,524.3 657.3,637.2 661.8,637.2 666.3,516 670.8,510.4 675.3,521.7 679.8,523 684.3,533.1 688.8,637.2 693.3,637.2 697.8,486.4 702.4,493.3 706.9,503.4 711.4,499 715.9,518.6 720.4,637.2 724.9,637.2 729.4,533.1 733.9,535.6 738.4,567.8 742.9,637.2 747.5,622.1 752,637.2 756.5,637.2 761,504.7 765.5,478.2 770,480.7 774.5,635.9 779,635.9 783.5,635.9 788,637.2 792.6,495.2 797.1,499 801.6,520.5 806.1,493.3 810.6,507.8 815.1,637.2 819.6,637.2 824.1,490.8 828.6,504.7 833.1,495.2 837.7,473.8 842.2,538.8 846.7,637.2 851.2,637.2 855.7,476.9 860.2,488.3 864.7,489.5 869.2,482.6 873.7,538.8 878.2,637.2 882.8,637.2 887.3,485.1 891.8,476.9 896.3,486.4 900.8,499 905.3,637.2 909.8,637.2 914.3,637.2 918.8,493.3 923.3,500.9 927.9,492.1 932.4,513.5 936.9,521.7 941.4,637.2 945.9,637.2 950.4,470 954.9,521.7 959.4,495.2 963.9,513.5 968.4,534.3 973,637.2 977.5,637.2 982,621.4 986.5,637.2 991,637.2 995.5,597.4 1000,615.7 1004.5,637.2 1009,637.2 1013.5,637.2 1018.1,635.9 1022.6,632.2 1027.1,615.7 1031.6,610.7 1036.1,637.2 1040.6,637.2 1045.1,482.6 1049.6,486.4 1054.1,486.4 1058.7,490.8 1063.2,561.5 1067.7,637.2 1072.2,637.2 1076.7,538.8 1081.2,637.2 1081.2,637.2 1076.7,593 1072.2,637.2 1067.7,637.2 1063.2,622.7 1058.7,589.2 1054.1,585.5 1049.6,584.8 1045.1,587.4 1040.6,637.2 1036.1,637.2 1031.6,629 1027.1,632.2 1022.6,635.3 1018.1,635.9 1013.5,637.2 1009,637.2 1004.5,637.2 1000,629.6 995.5,619.5 991,637.2 986.5,637.2 982,630.9 977.5,637.2 973,637.2 968.4,608.8 963.9,593 959.4,590.5 954.9,597.4 950.4,581.7 945.9,637.2 941.4,637.2 936.9,591.8 932.4,587.4 927.9,586.1 923.3,587.4 918.8,583.6 914.3,637.2 909.8,637.2 905.3,637.2 900.8,586.1 896.3,580.4 891.8,579.1 887.3,579.8 882.8,637.2 878.2,637.2 873.7,605.7 869.2,579.1 864.7,583.6 860.2,580.4 855.7,580.4 851.2,637.2 846.7,637.2 842.2,608.8 837.7,591.8 833.1,586.1 828.6,584.8 824.1,586.1 819.6,637.2 815.1,637.2 810.6,594.3 806.1,589.2 801.6,587.4 797.1,586.1 792.6,584.8 788,637.2 783.5,635.9 779,635.9 774.5,635.9 770,582.9 765.5,584.8 761,591.8 756.5,637.2 752,637.2 747.5,632.2 742.9,637.2 738.4,614.5 733.9,606.9 729.4,605.7 724.9,637.2 720.4,637.2 715.9,605.7 711.4,589.2 706.9,591.8 702.4,589.2 697.8,588.6 693.3,637.2 688.8,637.2 684.3,611.3 679.8,594.3 675.3,589.2 670.8,591.8 666.3,591.8 661.8,637.2 657.3,637.2 652.8,603.1 648.2,593 643.7,635.3 639.2,591.8 634.7,600 630.2,637.2 625.7,637.2 621.2,601.9 616.7,597.4 612.2,628.4 607.6,590.5 603.1,590.5 598.6,637.2 594.1,637.2 589.6,591.8 585.1,591.8 580.6,591.8 576.1,590.5 571.6,589.2 567.1,637.2 562.5,637.2 558,601.9 553.5,600 549,594.3 544.5,635.3 540,594.3 535.5,637.2 531,637.2 526.5,622.7 522,594.3 517.4,600 512.9,598.7 508.4,596.2 503.9,637.2 499.4,637.2 494.9,627.7 490.4,594.3 485.9,597.4 481.4,596.2 476.9,594.3 472.3,637.2 467.8,637.2 463.3,622.7 458.8,602.5 454.3,601.9 449.8,605.7 445.3,604.4 440.8,637.2 436.3,637.2 431.8,627.1 427.2,617 422.7,622.7 418.2,619.5 413.7,625.2 409.2,637.2 404.7,635.9 400.2,635.9 395.7,634.7 391.2,635.9 386.7,635.3 382.1,635.9 377.6,635.9 373.1,635.9 368.6,635.9 364.1,637.2 359.6,627.1 355.1,629 350.6,632.2 346.1,635.3 341.6,635.3 337,622.7 332.5,605.7 328,601.9 323.5,594.3 319,598.7 314.5,637.2 310,637.2 305.5,637.2 301,600 296.5,591.1 291.9,588.6 287.4,608.8 282.9,637.2 278.4,635.3 273.9,611.3 269.4,637.2" fill="#fb88fb" stroke="none"/>
<polygon points="269.4,637.2 273.9,590.2 278.4,635.3 282.9,637.2 287.4,539.7 291.9,482.6 296.5,478.2 301,502.6 305.5,637.2 310,637.2 314.5,637.2 319,521.3 323.5,503.5 328,540.5 332.5,560.1 337,593.5 341.6,635.3 346.1,635.3 350.6,618.8 355.1,613.7 359.6,613.1 364.1,637.2 368.6,635.9 373.1,635.9 377.6,635.9 382.1,635.9 386.7,635.3 391.2,635.9 395.7,634.7 400.2,635.9 404.7,635.9 409.2,637.2 413.7,607.4 418.2,598.4 422.7,600.3 427.2,595.7 431.8,612.7 436.3,637.2 440.8,637.2 445.3,529.7 449.8,537.9 454.3,502.8 458.8,510.1 463.3,569.4 467.8,637.2 472.3,637.2 476.9,470 481.4,475.7 485.9,490.2 490.4,493.3 494.9,608.2 499.4,637.2 503.9,637.2 508.4,487 512.9,506.6 517.4,516.3 522,472.6 526.5,558.2 531,637.2 535.5,637.2 540,487.4 544.5,635.3 549,493.9 553.5,502.8 558,522.5 562.5,637.2 567.1,637.2 571.6,486.4 576.1,495.4 580.6,488.3 585.1,492.8 589.6,473.8 594.1,637.2 598.6,637.2 603.1,480.9 607.6,488.8 612.2,607.9 616.7,515.9 621.2,528.7 625.7,637.2 630.2,637.2 634.7,502.8 639.2,494.1 643.7,634 648.2,496.7 652.8,518.4 657.3,637.2 661.8,637.2 666.3,509.1 670.8,507.8 675.3,517 679.8,518.6 684.3,528.7 688.8,637.2 693.3,637.2 697.8,479.5 702.4,486.4 706.9,496.6 711.4,496.5 715.9,512.7 720.4,637.2 724.9,637.2 729.4,530.6 733.9,532.4 738.4,565.9 742.9,637.2 747.5,621.3 752,637.2 756.5,637.2 761,501.9 765.5,472.5 770,472.4 774.5,635.9 779,635.9 783.5,635.9 788,637.2 792.6,491.8 797.1,494.1 801.6,513.3 806.1,484.6 810.6,504.4 815.1,637.2 819.6,637.2 824.1,485.1 828.6,500.9 833.1,490.8 837.7,468.1 842.2,530.4 846.7,637.2 851.2,637.2 855.7,473.8 860.2,480.7 864.7,481.2 869.2,475.8 873.7,530.4 878.2,637.2 882.8,637.2 887.3,482.6 891.8,471.8 896.3,481.8 900.8,497.9 905.3,637.2 909.8,637.2 914.3,637.2 918.8,490.8 923.3,496.2 927.9,489.5 932.4,510.1 936.9,517.3 941.4,637.2 945.9,637.2 950.4,468.1 954.9,507.8 959.4,490.8 963.9,509.1 968.4,534 973,637.2 977.5,637.2 982,620.5 986.5,637.2 991,637.2 995.5,595.4 1000,614.6 1004.5,637.2 1009,637.2 1013.5,637.2 1018.1,635.9 1022.6,631.8 1027.1,614.8 1031.6,609.6 1036.1,637.2 1040.6,637.2 1045.1,475.7 1049.6,478.2 1054.1,476.3 1058.7,479.5 1063.2,557.9 1067.7,637.2 1072.2,637.2 1076.7,529.5 1081.2,637.2 1081.2,637.2 1076.7,538.8 1072.2,637.2 1067.7,637.2 1063.2,561.5 1058.7,490.8 1054.1,486.4 1049.6,486.4 1045.1,482.6 1040.6,637.2 1036.1,637.2 1031.6,610.7 1027.1,615.7 1022.6,632.2 1018.1,635.9 1013.5,637.2 1009,637.2 1004.5,637.2 1000,615.7 995.5,597.4 991,637.2 986.5,637.2 982,621.4 977.5,637.2 973,637.2 968.4,534.3 963.9,513.5 959.4,495.2 954.9,521.7 950.4,470 945.9,637.2 941.4,637.2 936.9,521.7 932.4,513.5 927.9,492.1 923.3,500.9 918.8,493.3 914.3,637.2 909.8,637.2 905.3,637.2 900.8,499 896.3,486.4 891.8,476.9 887.3,485.1 882.8,637.2 878.2,637.2 873.7,538.8 869.2,482.6 864.7,489.5 860.2,488.3 855.7,476.9 851.2,637.2 846.7,637.2 842.2,538.8 837.7,473.8 833.1,495.2 828.6,504.7 824.1,490.8 819.6,637.2 815.1,637.2 810.6,507.8 806.1,493.3 801.6,520.5 797.1,499 792.6,495.2 788,637.2 783.5,635.9 779,635.9 774.5,635.9 770,480.7 765.5,478.2 761,504.7 756.5,637.2 752,637.2 747.5,622.1 742.9,637.2 738.4,567.8 733.9,535.6 729.4,533.1 724.9,637.2 720.4,637.2 715.9,518.6 711.4,499 706.9,503.4 702.4,493.3 697.8,486.4 693.3,637.2 688.8,637.2 684.3,533.1 679.8,523 675.3,521.7 670.8,510.4 666.3,516 661.8,637.2 657.3,637.2 652.8,524.3 648.2,504.7 643.7,634 639.2,500.9 634.7,504.7 630.2,637.2 625.7,637.2 621.2,533.1 616.7,521.7 612.2,608.8 607.6,493.3 603.1,486.4 598.6,637.2 594.1,637.2 589.6,482.6 585.1,499 580.6,493.3 576.1,500.9 571.6,493.3 567.1,637.2 562.5,637.2 558,524.3 553.5,510.4 549,500.9 544.5,635.3 540,490.8 535.5,637.2 531,637.2 526.5,566.5 522,488.3 517.4,518.6 512.9,510.4 508.4,490.8 503.9,637.2 499.4,637.2 494.9,612 490.4,499.6 485.9,492.1 481.4,483.9 476.9,478.2 472.3,637.2 467.8,637.2 463.3,574.1 458.8,517.3 454.3,510.4 449.8,540 445.3,531.2 440.8,637.2 436.3,637.2 431.8,613.2 427.2,596.8 422.7,601.2 418.2,599.3 413.7,608.2 409.2,637.2 404.7,635.9 400.2,635.9 395.7,634.7 391.2,635.9 386.7,635.3 382.1,635.9 377.6,635.9 373.1,635.9 368.6,635.9 364.1,637.2 359.6,613.9 355.1,614.5 350.6,619.5 346.1,635.3 341.6,635.3 337,594.3 332.5,560.8 328,541.3 323.5,506 319,523 314.5,637.2 310,637.2 305.5,637.2 301,504.7 296.5,490.8 291.9,494.6 287.4,542.6 282.9,637.2 278.4,635.3 273.9,594.9 269.4,637.2" fill="#d8a2a6" stroke="none"/>
<polygon points="269.4,637.2 273.9,579.1 278.4,635.3 282.9,637.2 287.4,533.1 291.9,471.9 296.5,459.3 301,497.7 305.5,637.2 310,637.2 314.5,637.2 319,517.3 323.5,497.7 328,538.8 332.5,558.3 337,591.8 341.6,635.3 346.1,635.3 350.6,617 355.1,612 359.6,611.3 364.1,637.2 368.6,635.9 373.1,635.9 377.6,635.9 382.1,635.9 386.7,635.3 391.2,635.9 395.7,634.7 400.2,635.9 404.7,635.9 409.2,637.2 413.7,605.7 418.2,596.2 422.7,598.1 427.2,593 431.8,611.3 436.3,637.2 440.8,637.2 445.3,526.1 449.8,533.1 454.3,485.1 458.8,493.3 463.3,558.3 467.8,637.2 472.3,637.2 476.9,457.4 481.4,445.4 485.9,441.6 490.4,439.7 494.9,599.3 499.4,637.2 503.9,637.2 508.4,478.2 512.9,497.7 517.4,511 522,435.9 526.5,538.8 531,637.2 535.5,637.2 540,479.5 544.5,635.3 549,477.6 553.5,485.1 558,518.6 562.5,637.2 567.1,637.2 571.6,478.2 576.1,482.6 580.6,468.1 585.1,478.2 589.6,451.7 594.1,637.2 598.6,637.2 603.1,468.1 607.6,478.2 612.2,605.7 616.7,502.2 621.2,518.6 625.7,637.2 630.2,637.2 634.7,498.4 639.2,478.2 643.7,634 648.2,478.2 652.8,504.7 657.3,637.2 661.8,637.2 666.3,499 670.8,497.7 675.3,506 679.8,507.8 684.3,523 688.8,637.2 693.3,637.2 697.8,461.2 702.4,464.3 706.9,480.7 711.4,480.7 715.9,499 720.4,637.2 724.9,637.2 729.4,524.9 733.9,524.9 738.4,561.5 742.9,637.2 747.5,619.5 752,637.2 756.5,637.2 761,495.2 765.5,459.3 770,452.9 774.5,635.9 779,635.9 783.5,635.9 788,637.2 792.6,483.9 797.1,482.6 801.6,496.5 806.1,464.3 810.6,496.5 815.1,637.2 819.6,637.2 824.1,468.1 828.6,485.1 833.1,476.9 837.7,434.6 842.2,511 846.7,637.2 851.2,637.2 855.7,454.2 860.2,463 864.7,461.8 869.2,459.9 873.7,511 878.2,637.2 882.8,637.2 887.3,475.7 891.8,459.9 896.3,471.2 900.8,495.2 905.3,637.2 909.8,637.2 914.3,637.2 918.8,475.7 923.3,485.1 927.9,472.5 932.4,502.2 936.9,507.8 941.4,637.2 945.9,637.2 950.4,451.7 954.9,479.5 959.4,471.2 963.9,504.7 968.4,533.1 973,637.2 977.5,637.2 982,618.3 986.5,637.2 991,637.2 995.5,590.5 1000,612 1004.5,637.2 1009,637.2 1013.5,637.2 1018.1,635.9 1022.6,630.9 1027.1,612.6 1031.6,606.9 1036.1,637.2 1040.6,637.2 1045.1,459.9 1049.6,455.5 1054.1,461.2 1058.7,465.6 1063.2,549.5 1067.7,637.2 1072.2,637.2 1076.7,507.8 1081.2,637.2 1081.2,637.2 1076.7,529.5 1072.2,637.2 1067.7,637.2 1063.2,557.9 1058.7,479.5 1054.1,476.3 1049.6,478.2 1045.1,475.7 1040.6,637.2 1036.1,637.2 1031.6,609.6 1027.1,614.8 1022.6,631.8 1018.1,635.9 1013.5,637.2 1009,637.2 1004.5,637.2 1000,614.6 995.5,595.4 991,637.2 986.5,637.2 982,620.5 977.5,637.2 973,637.2 968.4,534 963.9,509.1 959.4,490.8 954.9,507.8 950.4,468.1 945.9,637.2 941.4,637.2 936.9,517.3 932.4,510.1 927.9,489.5 923.3,496.2 918.8,490.8 914.3,637.2 909.8,637.2 905.3,637.2 900.8,497.9 896.3,481.8 891.8,471.8 887.3,482.6 882.8,637.2 878.2,637.2 873.7,530.4 869.2,475.8 864.7,481.2 860.2,480.7 855.7,473.8 851.2,637.2 846.7,637.2 842.2,530.4 837.7,468.1 833.1,490.8 828.6,500.9 824.1,485.1 819.6,637.2 815.1,637.2 810.6,504.4 806.1,484.6 801.6,513.3 797.1,494.1 792.6,491.8 788,637.2 783.5,635.9 779,635.9 774.5,635.9 770,472.4 765.5,472.5 761,501.9 756.5,637.2 752,637.2 747.5,621.3 742.9,637.2 738.4,565.9 733.9,532.4 729.4,530.6 724.9,637.2 720.4,637.2 715.9,512.7 711.4,496.5 706.9,496.6 702.4,486.4 697.8,479.5 693.3,637.2 688.8,637.2 684.3,528.7 679.8,518.6 675.3,517 670.8,507.8 666.3,509.1 661.8,637.2 657.3,637.2 652.8,518.4 648.2,496.7 643.7,634 639.2,494.1 634.7,502.8 630.2,637.2 625.7,637.2 621.2,528.7 616.7,515.9 612.2,607.9 607.6,488.8 603.1,480.9 598.6,637.2 594.1,637.2 589.6,473.8 585.1,492.8 580.6,488.3 576.1,495.4 571.6,486.4 567.1,637.2 562.5,637.2 558,522.5 553.5,502.8 549,493.9 544.5,635.3 540,487.4 535.5,637.2 531,637.2 526.5,558.2 522,472.6 517.4,516.3 512.9,506.6 508.4,487 503.9,637.2 499.4,637.2 494.9,608.2 490.4,493.3 485.9,490.2 481.4,475.7 476.9,470 472.3,637.2 467.8,637.2 463.3,569.4 458.8,510.1 454.3,502.8 449.8,537.9 445.3,529.7 440.8,637.2 436.3,637.2 431.8,612.7 427.2,595.7 422.7,600.3 418.2,598.4 413.7,607.4 409.2,637.2 404.7,635.9 400.2,635.9 395.7,634.7 391.2,635.9 386.7,635.3 382.1,635.9 377.6,635.9 373.1,635.9 368.6,635.9 364.1,637.2 359.6,613.1 355.1,613.7 350.6,618.8 346.1,635.3 341.6,635.3 337,593.5 332.5,560.1 328,540.5 323.5,503.5 319,521.3 314.5,637.2 310,637.2 305.5,637.2 301,502.6 296.5,478.2 291.9,482.6 287.4,539.7 282.9,637.2 278.4,635.3 273.9,590.2 269.4,637.2" fill="#f5d79a" stroke="none"/>
<polyline points="269.4,637.2 273.9,634.7 278.4,636.9 282.9,637.2 287.4,634.7 291.9,630.6 296.5,632.2 301,632.2 305.5,637.2 310,637.2 314.5,637.2 319,633.4 323.5,631.2 328,632.8 332.5,634 337,636.3 341.6,636.9 346.1,636.9 350.6,636.3 355.1,635.9 359.6,635.9 364.1,637.2 368.6,637 373.1,637 377.6,637 382.1,637 386.7,636.9 391.2,637 395.7,636.8 400.2,637 404.7,637 409.2,637.2 413.7,635.6 418.2,635 422.7,635.3 427.2,635 431.8,635.6 436.3,637.2 440.8,637.2 445.3,633.1 449.8,633.1 454.3,632.5 458.8,632.5 463.3,635.6 467.8,637.2 472.3,637.2 476.9,632.2 481.4,631.5 485.9,631.5 490.4,632.5 494.9,636.3 499.4,637.2 503.9,637.2 508.4,632.5 512.9,632.5 517.4,632.8 522,632.2 526.5,635.3 531,637.2 535.5,637.2 540,632.8 544.5,636.9 549,631.5 553.5,631.8 558,632.5 562.5,637.2 567.1,637.2 571.6,630.6 576.1,630.6 580.6,629.9 585.1,630.3 589.6,630.6 594.1,637.2 598.6,637.2 603.1,630.6 607.6,630.6 612.2,635.6 616.7,632.2 621.2,633.4 625.7,637.2 630.2,637.2 634.7,629.3 639.2,628.4 643.7,636.9 648.2,629.3 652.8,630.9 657.3,637.2 661.8,637.2 666.3,632.8 670.8,632.5 675.3,632.5 679.8,632.8 684.3,634 688.8,637.2 693.3,637.2 697.8,627.1 702.4,627.7 706.9,628.1 711.4,628.4 715.9,629.9 720.4,637.2 724.9,637.2 729.4,632.8 733.9,633.1 738.4,634 742.9,637.2 747.5,636.3 752,637.2 756.5,637.2 761,629.3 765.5,627.7 770,628.4 774.5,637 779,637 783.5,637 788,637.2 792.6,628.4 797.1,627.7 801.6,628.1 806.1,628.4 810.6,629.9 815.1,637.2 819.6,637.2 824.1,628.4 828.6,627.7 833.1,627.7 837.7,627.7 842.2,630.9 846.7,637.2 851.2,637.2 855.7,627.1 860.2,628.4 864.7,627.1 869.2,625.8 873.7,631.2 878.2,637.2 882.8,637.2 887.3,627.7 891.8,625.8 896.3,627.1 900.8,628.4 905.3,637.2 909.8,637.2 914.3,637.2 918.8,629.3 923.3,628.4 927.9,628.4 932.4,629.3 936.9,631.2 941.4,637.2 945.9,637.2 950.4,628.4 954.9,629.9 959.4,628.4 963.9,629.9 968.4,632.5 973,637.2 977.5,637.2 982,636.3 986.5,637.2 991,637.2 995.5,635.6 1000,636.3 1004.5,637.2 1009,637.2 1013.5,637.2 1018.1,637 1022.6,636.9 1027.1,636.3 1031.6,635.9 1036.1,637.2 1040.6,637.2 1045.1,629.9 1049.6,630.9 1054.1,631.2 1058.7,632.2 1063.2,635.3 1067.7,637.2 1072.2,637.2 1076.7,632.2 1081.2,637.2" fill="none" stroke="#22e8f0" stroke-width="1.6" stroke-linejoin="round"/>
<polyline points="269.4,637.2 273.9,632.2 278.4,636.6 282.9,637.2 287.4,632.2 291.9,623.9 296.5,627.1 301,627.1 305.5,637.2 310,637.2 314.5,637.2 319,629.6 323.5,625.2 328,628.4 332.5,630.9 337,635.3 341.6,636.6 346.1,636.6 350.6,635.3 355.1,634.7 359.6,634.7 364.1,637.2 368.6,636.8 373.1,636.8 377.6,636.8 382.1,636.8 386.7,636.6 391.2,636.8 395.7,636.4 400.2,636.8 404.7,636.8 409.2,637.2 413.7,634 418.2,632.8 422.7,633.4 427.2,632.8 431.8,634 436.3,637.2 440.8,637.2 445.3,629 449.8,629 454.3,627.7 458.8,627.7 463.3,634 467.8,637.2 472.3,637.2 476.9,627.1 481.4,625.8 485.9,625.8 490.4,627.7 494.9,635.3 499.4,637.2 503.9,637.2 508.4,627.7 512.9,627.7 517.4,628.4 522,627.1 526.5,633.4 531,637.2 535.5,637.2 540,628.4 544.5,636.6 549,625.8 553.5,626.5 558,627.7 562.5,637.2 567.1,637.2 571.6,623.9 576.1,623.9 580.6,622.7 585.1,623.3 589.6,623.9 594.1,637.2 598.6,637.2 603.1,623.9 607.6,623.9 612.2,634 616.7,627.1 621.2,629.6 625.7,637.2 630.2,637.2 634.7,621.4 639.2,619.5 643.7,636.6 648.2,621.4 652.8,624.6 657.3,637.2 661.8,637.2 666.3,628.4 670.8,627.7 675.3,627.7 679.8,628.4 684.3,630.9 688.8,637.2 693.3,637.2 697.8,617 702.4,618.3 706.9,618.9 711.4,619.5 715.9,622.7 720.4,637.2 724.9,637.2 729.4,628.4 733.9,629 738.4,630.9 742.9,637.2 747.5,635.3 752,637.2 756.5,637.2 761,621.4 765.5,618.3 770,619.5 774.5,636.8 779,636.8 783.5,636.8 788,637.2 792.6,619.5 797.1,618.3 801.6,618.9 806.1,619.5 810.6,622.7 815.1,637.2 819.6,637.2 824.1,619.5 828.6,618.3 833.1,618.3 837.7,618.3 842.2,624.6 846.7,637.2 851.2,637.2 855.7,617 860.2,619.5 864.7,617 869.2,614.5 873.7,625.2 878.2,637.2 882.8,637.2 887.3,618.3 891.8,614.5 896.3,617 900.8,619.5 905.3,637.2 909.8,637.2 914.3,637.2 918.8,621.4 923.3,619.5 927.9,619.5 932.4,621.4 936.9,625.2 941.4,637.2 945.9,637.2 950.4,619.5 954.9,622.7 959.4,619.5 963.9,622.7 968.4,627.7 973,637.2 977.5,637.2 982,635.3 986.5,637.2 991,637.2 995.5,634 1000,635.3 1004.5,637.2 1009,637.2 1013.5,637.2 1018.1,636.8 1022.6,636.6 1027.1,635.3 1031.6,634.7 1036.1,637.2 1040.6,637.2 1045.1,622.7 1049.6,624.6 1054.1,625.2 1058.7,627.1 1063.2,633.4 1067.7,637.2 1072.2,637.2 1076.7,627.1 1081.2,637.2" fill="none" stroke="#45b4ee" stroke-width="1.6" stroke-linejoin="round"/>
<polyline points="269.4,637.2 273.9,611.3 278.4,635.3 282.9,637.2 287.4,608.8 291.9,588.6 296.5,591.1 301,600 305.5,637.2 310,637.2 314.5,637.2 319,598.7 323.5,594.3 328,601.9 332.5,605.7 337,622.7 341.6,635.3 346.1,635.3 350.6,632.2 355.1,629 359.6,627.1 364.1,637.2 368.6,635.9 373.1,635.9 377.6,635.9 382.1,635.9 386.7,635.3 391.2,635.9 395.7,634.7 400.2,635.9 404.7,635.9 409.2,637.2 413.7,625.2 418.2,619.5 422.7,622.7 427.2,617 431.8,627.1 436.3,637.2 440.8,637.2 445.3,604.4 449.8,605.7 454.3,601.9 458.8,602.5 463.3,622.7 467.8,637.2 472.3,637.2 476.9,594.3 481.4,596.2 485.9,597.4 490.4,594.3 494.9,627.7 499.4,637.2 503.9,637.2 508.4,596.2 512.9,598.7 517.4,600 522,594.3 526.5,622.7 531,637.2 535.5,637.2 540,594.3 544.5,635.3 549,594.3 553.5,600 558,601.9 562.5,637.2 567.1,637.2 571.6,589.2 576.1,590.5 580.6,591.8 585.1,591.8 589.6,591.8 594.1,637.2 598.6,637.2 603.1,590.5 607.6,590.5 612.2,628.4 616.7,597.4 621.2,601.9 625.7,637.2 630.2,637.2 634.7,600 639.2,591.8 643.7,635.3 648.2,593 652.8,603.1 657.3,637.2 661.8,637.2 666.3,591.8 670.8,591.8 675.3,589.2 679.8,594.3 684.3,611.3 688.8,637.2 693.3,637.2 697.8,588.6 702.4,589.2 706.9,591.8 711.4,589.2 715.9,605.7 720.4,637.2 724.9,637.2 729.4,605.7 733.9,606.9 738.4,614.5 742.9,637.2 747.5,632.2 752,637.2 756.5,637.2 761,591.8 765.5,584.8 770,582.9 774.5,635.9 779,635.9 783.5,635.9 788,637.2 792.6,584.8 797.1,586.1 801.6,587.4 806.1,589.2 810.6,594.3 815.1,637.2 819.6,637.2 824.1,586.1 828.6,584.8 833.1,586.1 837.7,591.8 842.2,608.8 846.7,637.2 851.2,637.2 855.7,580.4 860.2,580.4 864.7,583.6 869.2,579.1 873.7,605.7 878.2,637.2 882.8,637.2 887.3,579.8 891.8,579.1 896.3,580.4 900.8,586.1 905.3,637.2 909.8,637.2 914.3,637.2 918.8,583.6 923.3,587.4 927.9,586.1 932.4,587.4 936.9,591.8 941.4,637.2 945.9,637.2 950.4,581.7 954.9,597.4 959.4,590.5 963.9,593 968.4,608.8 973,637.2 977.5,637.2 982,630.9 986.5,637.2 991,637.2 995.5,619.5 1000,629.6 1004.5,637.2 1009,637.2 1013.5,637.2 1018.1,635.9 1022.6,635.3 1027.1,632.2 1031.6,629 1036.1,637.2 1040.6,637.2 1045.1,587.4 1049.6,584.8 1054.1,585.5 1058.7,589.2 1063.2,622.7 1067.7,637.2 1072.2,637.2 1076.7,593 1081.2,637.2" fill="none" stroke="#4a1f7e" stroke-width="1.6" stroke-linejoin="round"/>
<polyline points="269.4,637.2 273.9,594.9 278.4,635.3 282.9,637.2 287.4,542.6 291.9,494.6 296.5,490.8 301,504.7 305.5,637.2 310,637.2 314.5,637.2 319,523 323.5,506 328,541.3 332.5,560.8 337,594.3 341.6,635.3 346.1,635.3 350.6,619.5 355.1,614.5 359.6,613.9 364.1,637.2 368.6,635.9 373.1,635.9 377.6,635.9 382.1,635.9 386.7,635.3 391.2,635.9 395.7,634.7 400.2,635.9 404.7,635.9 409.2,637.2 413.7,608.2 418.2,599.3 422.7,601.2 427.2,596.8 431.8,613.2 436.3,637.2 440.8,637.2 445.3,531.2 449.8,540 454.3,510.4 458.8,517.3 463.3,574.1 467.8,637.2 472.3,637.2 476.9,478.2 481.4,483.9 485.9,492.1 490.4,499.6 494.9,612 499.4,637.2 503.9,637.2 508.4,490.8 512.9,510.4 517.4,518.6 522,488.3 526.5,566.5 531,637.2 535.5,637.2 540,490.8 544.5,635.3 549,500.9 553.5,510.4 558,524.3 562.5,637.2 567.1,637.2 571.6,493.3 576.1,500.9 580.6,493.3 585.1,499 589.6,482.6 594.1,637.2 598.6,637.2 603.1,486.4 607.6,493.3 612.2,608.8 616.7,521.7 621.2,533.1 625.7,637.2 630.2,637.2 634.7,504.7 639.2,500.9 643.7,634 648.2,504.7 652.8,524.3 657.3,637.2 661.8,637.2 666.3,516 670.8,510.4 675.3,521.7 679.8,523 684.3,533.1 688.8,637.2 693.3,637.2 697.8,486.4 702.4,493.3 706.9,503.4 711.4,499 715.9,518.6 720.4,637.2 724.9,637.2 729.4,533.1 733.9,535.6 738.4,567.8 742.9,637.2 747.5,622.1 752,637.2 756.5,637.2 761,504.7 765.5,478.2 770,480.7 774.5,635.9 779,635.9 783.5,635.9 788,637.2 792.6,495.2 797.1,499 801.6,520.5 806.1,493.3 810.6,507.8 815.1,637.2 819.6,637.2 824.1,490.8 828.6,504.7 833.1,495.2 837.7,473.8 842.2,538.8 846.7,637.2 851.2,637.2 855.7,476.9 860.2,488.3 864.7,489.5 869.2,482.6 873.7,538.8 878.2,637.2 882.8,637.2 887.3,485.1 891.8,476.9 896.3,486.4 900.8,499 905.3,637.2 909.8,637.2 914.3,637.2 918.8,493.3 923.3,500.9 927.9,492.1 932.4,513.5 936.9,521.7 941.4,637.2 945.9,637.2 950.4,470 954.9,521.7 959.4,495.2 963.9,513.5 968.4,534.3 973,637.2 977.5,637.2 982,621.4 986.5,637.2 991,637.2 995.5,597.4 1000,615.7 1004.5,637.2 1009,637.2 1013.5,637.2 1018.1,635.9 1022.6,632.2 1027.1,615.7 1031.6,610.7 1036.1,637.2 1040.6,637.2 1045.1,482.6 1049.6,486.4 1054.1,486.4 1058.7,490.8 1063.2,561.5 1067.7,637.2 1072.2,637.2 1076.7,538.8 1081.2,637.2" fill="none" stroke="#e81ee8" stroke-width="1.6" stroke-linejoin="round"/>
<polyline points="269.4,637.2 273.9,590.2 278.4,635.3 282.9,637.2 287.4,539.7 291.9,482.6 296.5,478.2 301,502.6 305.5,637.2 310,637.2 314.5,637.2 319,521.3 323.5,503.5 328,540.5 332.5,560.1 337,593.5 341.6,635.3 346.1,635.3 350.6,618.8 355.1,613.7 359.6,613.1 364.1,637.2 368.6,635.9 373.1,635.9 377.6,635.9 382.1,635.9 386.7,635.3 391.2,635.9 395.7,634.7 400.2,635.9 404.7,635.9 409.2,637.2 413.7,607.4 418.2,598.4 422.7,600.3 427.2,595.7 431.8,612.7 436.3,637.2 440.8,637.2 445.3,529.7 449.8,537.9 454.3,502.8 458.8,510.1 463.3,569.4 467.8,637.2 472.3,637.2 476.9,470 481.4,475.7 485.9,490.2 490.4,493.3 494.9,608.2 499.4,637.2 503.9,637.2 508.4,487 512.9,506.6 517.4,516.3 522,472.6 526.5,558.2 531,637.2 535.5,637.2 540,487.4 544.5,635.3 549,493.9 553.5,502.8 558,522.5 562.5,637.2 567.1,637.2 571.6,486.4 576.1,495.4 580.6,488.3 585.1,492.8 589.6,473.8 594.1,637.2 598.6,637.2 603.1,480.9 607.6,488.8 612.2,607.9 616.7,515.9 621.2,528.7 625.7,637.2 630.2,637.2 634.7,502.8 639.2,494.1 643.7,634 648.2,496.7 652.8,518.4 657.3,637.2 661.8,637.2 666.3,509.1 670.8,507.8 675.3,517 679.8,518.6 684.3,528.7 688.8,637.2 693.3,637.2 697.8,479.5 702.4,486.4 706.9,496.6 711.4,496.5 715.9,512.7 720.4,637.2 724.9,637.2 729.4,530.6 733.9,532.4 738.4,565.9 742.9,637.2 747.5,621.3 752,637.2 756.5,637.2 761,501.9 765.5,472.5 770,472.4 774.5,635.9 779,635.9 783.5,635.9 788,637.2 792.6,491.8 797.1,494.1 801.6,513.3 806.1,484.6 810.6,504.4 815.1,637.2 819.6,637.2 824.1,485.1 828.6,500.9 833.1,490.8 837.7,468.1 842.2,530.4 846.7,637.2 851.2,637.2 855.7,473.8 860.2,480.7 864.7,481.2 869.2,475.8 873.7,530.4 878.2,637.2 882.8,637.2 887.3,482.6 891.8,471.8 896.3,481.8 900.8,497.9 905.3,637.2 909.8,637.2 914.3,637.2 918.8,490.8 923.3,496.2 927.9,489.5 932.4,510.1 936.9,517.3 941.4,637.2 945.9,637.2 950.4,468.1 954.9,507.8 959.4,490.8 963.9,509.1 968.4,534 973,637.2 977.5,637.2 982,620.5 986.5,637.2 991,637.2 995.5,595.4 1000,614.6 1004.5,637.2 1009,637.2 1013.5,637.2 1018.1,635.9 1022.6,631.8 1027.1,614.8 1031.6,609.6 1036.1,637.2 1040.6,637.2 1045.1,475.7 1049.6,478.2 1054.1,476.3 1058.7,479.5 1063.2,557.9 1067.7,637.2 1072.2,637.2 1076.7,529.5 1081.2,637.2" fill="none" stroke="#a33030" stroke-width="1.6" stroke-linejoin="round"/>
<polyline points="269.4,637.2 273.9,579.1 278.4,635.3 282.9,637.2 287.4,533.1 291.9,471.9 296.5,459.3 301,497.7 305.5,637.2 310,637.2 314.5,637.2 319,517.3 323.5,497.7 328,538.8 332.5,558.3 337,591.8 341.6,635.3 346.1,635.3 350.6,617 355.1,612 359.6,611.3 364.1,637.2 368.6,635.9 373.1,635.9 377.6,635.9 382.1,635.9 386.7,635.3 391.2,635.9 395.7,634.7 400.2,635.9 404.7,635.9 409.2,637.2 413.7,605.7 418.2,596.2 422.7,598.1 427.2,593 431.8,611.3 436.3,637.2 440.8,637.2 445.3,526.1 449.8,533.1 454.3,485.1 458.8,493.3 463.3,558.3 467.8,637.2 472.3,637.2 476.9,457.4 481.4,445.4 485.9,441.6 490.4,439.7 494.9,599.3 499.4,637.2 503.9,637.2 508.4,478.2 512.9,497.7 517.4,511 522,435.9 526.5,538.8 531,637.2 535.5,637.2 540,479.5 544.5,635.3 549,477.6 553.5,485.1 558,518.6 562.5,637.2 567.1,637.2 571.6,478.2 576.1,482.6 580.6,468.1 585.1,478.2 589.6,451.7 594.1,637.2 598.6,637.2 603.1,468.1 607.6,478.2 612.2,605.7 616.7,502.2 621.2,518.6 625.7,637.2 630.2,637.2 634.7,498.4 639.2,478.2 643.7,634 648.2,478.2 652.8,504.7 657.3,637.2 661.8,637.2 666.3,499 670.8,497.7 675.3,506 679.8,507.8 684.3,523 688.8,637.2 693.3,637.2 697.8,461.2 702.4,464.3 706.9,480.7 711.4,480.7 715.9,499 720.4,637.2 724.9,637.2 729.4,524.9 733.9,524.9 738.4,561.5 742.9,637.2 747.5,619.5 752,637.2 756.5,637.2 761,495.2 765.5,459.3 770,452.9 774.5,635.9 779,635.9 783.5,635.9 788,637.2 792.6,483.9 797.1,482.6 801.6,496.5 806.1,464.3 810.6,496.5 815.1,637.2 819.6,637.2 824.1,468.1 828.6,485.1 833.1,476.9 837.7,434.6 842.2,511 846.7,637.2 851.2,637.2 855.7,454.2 860.2,463 864.7,461.8 869.2,459.9 873.7,511 878.2,637.2 882.8,637.2 887.3,475.7 891.8,459.9 896.3,471.2 900.8,495.2 905.3,637.2 909.8,637.2 914.3,637.2 918.8,475.7 923.3,485.1 927.9,472.5 932.4,502.2 936.9,507.8 941.4,637.2 945.9,637.2 950.4,451.7 954.9,479.5 959.4,471.2 963.9,504.7 968.4,533.1 973,637.2 977.5,637.2 982,618.3 986.5,637.2 991,637.2 995.5,590.5 1000,612 1004.5,637.2 1009,637.2 1013.5,637.2 1018.1,635.9 1022.6,630.9 1027.1,612.6 1031.6,606.9 1036.1,637.2 1040.6,637.2 1045.1,459.9 1049.6,455.5 1054.1,461.2 1058.7,465.6 1063.2,549.5 1067.7,637.2 1072.2,637.2 1076.7,507.8 1081.2,637.2" fill="none" stroke="#e6a526" stroke-width="1.6" stroke-linejoin="round"/>
<text x="328" y="649" text-anchor="middle" class="ax2">août 2018</text>
<text x="468" y="649" text-anchor="middle" class="ax2">sept. 2018</text>
<text x="603" y="649" text-anchor="middle" class="ax2">oct. 2018</text>
<text x="742" y="649" text-anchor="middle" class="ax2">nov. 2018</text>
<text x="878" y="649" text-anchor="middle" class="ax2">déc. 2018</text>
<text x="1017" y="649" text-anchor="middle" class="ax2">janv. 2019</text>
<text x="250" y="715" text-anchor="end" class="ax">600</text>
<circle cx="1104.7" cy="487.9" r="3.8" fill="#22eef2"/>
<text x="1110.6" y="490.9" class="leg">PHC_Contingent</text>
<circle cx="1104.7" cy="506" r="3.8" fill="#45b4ee"/>
<text x="1110.6" y="509" class="leg">PHC_Employee</text>
<circle cx="1104.7" cy="524.1" r="3.8" fill="#4a1f7e"/>
<text x="1110.6" y="527.1" class="leg">PHC_Mobile Contingent</text>
<circle cx="1104.7" cy="542.1" r="3.8" fill="#f014f0"/>
<text x="1110.6" y="545.1" class="leg">PHC_Mobile Employee</text>
<circle cx="1104.7" cy="560.2" r="3.8" fill="#a32a2a"/>
<text x="1110.6" y="563.2" class="leg">Non PHC_Contingent</text>
<circle cx="1104.7" cy="578.3" r="3.8" fill="#e8a522"/>
<text x="1110.6" y="581.3" class="leg">Non PHC_Employee</text>
</svg>

<!-- right filters panel -->
<div class="abs" style="left:1249px;top:81px;width:31px;height:664px;background:#222222;border-left:1px solid #111"></div>
<svg class="abs" style="left:1258px;top:95px" width="12" height="14"><path d="M9 1.5 L3.5 7 L9 12.5" fill="none" stroke="#ccc" stroke-width="1.2"/></svg>


<!-- tabs -->
<div class="abs" style="left:206px;top:712px;width:1043px;height:33px;background:#e9e9e9;border-top:1px solid #dcdcdc"></div>
<svg class="abs" style="left:206px;top:712px" width="37" height="33"><g fill="#c8c8c8"><path d="M7 17 L11 13 V21 Z"/><path d="M30 17 L26 13 V21 Z"/></g></svg>
<div class="abs" style="left:243px;top:712px;width:1px;height:33px;background:#cfcfcf"></div>
<div class="tab" style="left:244px;width:92px"></div>
<div class="tab" style="left:336px;width:165px;background:#fff;color:#333;border-bottom:2px solid #f2c811;line-height:33px"></div>
<div class="tab" style="left:501px;width:233px;border-left:1px solid #d0d0d0"></div>
<div class="tab" style="left:734px;width:184px"></div>

<!-- taskbar -->
<div class="abs" style="left:0;top:745px;width:1280px;height:38px;background:#0d0f12"></div>
<svg class="abs" style="left:15px;top:756.5px" width="16" height="16"><g fill="#fff"><path d="M0 2.2 L6.6 1.3 V7.5 H0 Z M7.4 1.2 L15.2 0 V7.5 H7.4 Z M0 8.3 H6.6 V14.6 L0 13.7 Z M7.4 8.3 H15.2 V15.6 L7.4 14.5 Z"/></g></svg>
<div class="abs" style="left:45px;top:745px;width:322px;height:38px;background:#f1f1f1"></div>
<svg class="abs" style="left:52px;top:753px" width="24" height="24"><circle cx="12" cy="12" r="8.5" fill="none" stroke="#111" stroke-width="2.6"/></svg>

<svg class="abs" style="left:341px;top:755px" width="14" height="20"><g fill="none" stroke="#444" stroke-width="1.3"><rect x="4" y="1" width="6" height="11" rx="3"/><path d="M1.5 9 a5.5 5.5 0 0 0 11 0 M7 14.5 V18 M4 18 H10"/></g></svg>
<svg class="abs" style="left:0;top:745px;will-change:transform" width="1280" height="38">
<rect x="418.5" y="35.5" width="34.0" height="2.5" fill="#7ab6ec"/>
<rect x="461" y="35.5" width="34" height="2.5" fill="#7ab6ec"/>
<rect x="500" y="35.5" width="41.5" height="2.5" fill="#7ab6ec"/>
<rect x="542" y="35.5" width="42" height="2.5" fill="#f08030"/>
<rect x="589" y="35.5" width="33.5" height="2.5" fill="#7ab6ec"/>
<rect x="631" y="35.5" width="34" height="2.5" fill="#7ab6ec"/>
<rect x="673.5" y="35.5" width="34.0" height="2.5" fill="#7ab6ec"/>
<rect x="716" y="35.5" width="34" height="2.5" fill="#7ab6ec"/>
<rect x="758.5" y="35.5" width="34.5" height="2.5" fill="#7ab6ec"/>
<rect x="802" y="35.5" width="33.5" height="2.5" fill="#7ab6ec"/>
<rect x="844" y="35.5" width="33.5" height="2.5" fill="#7ab6ec"/>
<rect x="886" y="35.5" width="33.5" height="2.5" fill="#7ab6ec"/>
<rect x="500" y="0" width="42" height="35.5" fill="#3d3f42"/>
<rect x="542" y="0" width="42" height="35.5" fill="#9a5520"/>
<g fill="none" stroke="#e8e8e8" stroke-width="1.4"><path d="M382 12.5 H394 M382 26.5 H394 M384 15 V24 M392 15 V24 M384 15 H392 M384 24 H392"/><path d="M397 12 V27"/></g><circle cx="397" cy="19.5" r="1.6" fill="#e8e8e8"/>
<path d="M425 12 H432 L434 14 H445 V27 H425 Z" fill="#f4d16b"/><rect x="425" y="15" width="20" height="12" fill="#fbe29a"/><path d="M429 27 V21 H441 V27 H438 V24 H432 V27 Z" fill="#38a6e0"/>
<rect x="476" y="12" width="11" height="15" fill="#fff"/><g stroke="#2b579a" stroke-width="0.9"><path d="M478 15 H486 M478 17.5 H486 M478 20 H486 M478 22.5 H486 M478 25 H486"/></g><path d="M467.5 11.5 L478 9.8 V29 L467.5 27.5 Z" fill="#2b579a"/><text x="472.8" y="23" font-size="8" font-weight="bold" fill="#fff" text-anchor="middle">W</text>
<path d="M511.5 21 C511.5 12 523 8.5 528 15.5 C529.5 18 529.5 21 529 22.5 H516.5 C516.8 27 524 28.5 528.5 25.5 V28.5 C521 32 511.5 29 511.5 21 Z M516.8 19 H524.5 C524.2 14.5 517.2 14.5 516.8 19 Z" fill="#1e88e5"/>
<rect x="557" y="14" width="9" height="8" fill="#fff"/><path d="M557 14 L561.5 18 L566 14" fill="none" stroke="#0f5da8" stroke-width="0.8"/><path d="M551.5 10 L561 8.5 V29.5 L551.5 28 Z" fill="#1376d0"/><text x="556.2" y="22.8" font-size="8" font-weight="bold" fill="#fff" text-anchor="middle">O</text><rect x="562" y="22" width="10" height="8" fill="#f1b97c"/><path d="M562 22 L567 26.5 L572 22" fill="none" stroke="#d08a40" stroke-width="0.8"/>
<rect x="604" y="12" width="11" height="15" fill="#fff"/><path d="M606 15 a3.5 3.5 0 1 0 3.5 3.5 H606 Z" fill="#d24726"/><path d="M595.3 11 L606 9.5 V29 L595.3 27.5 Z" fill="#d24726"/><text x="600.6" y="22.8" font-size="8" font-weight="bold" fill="#fff" text-anchor="middle">P</text>
<rect x="646" y="12" width="11" height="15" fill="#fff"/><g stroke="#217346" stroke-width="0.8"><path d="M647 15 H656 M647 18 H656 M647 21 H656 M647 24 H656 M651 13 V26"/></g><path d="M638 11 L648 9.5 V29 L638 27.5 Z" fill="#217346"/><text x="643" y="22.8" font-size="8" font-weight="bold" fill="#fff" text-anchor="middle">X</text>
<circle cx="690" cy="18" r="9.5" fill="#00aff0"/><circle cx="690" cy="18" r="7" fill="none" stroke="#e6f6ff" stroke-width="0.8"/><text x="690" y="22.5" font-size="12" font-weight="bold" fill="#fff" text-anchor="middle">S</text><circle cx="699" cy="25.5" r="5.2" fill="#f1c40f"/><path d="M699 22.5 V25.5 H701" stroke="#8a6d00" stroke-width="0.8" fill="none"/>
<circle cx="740" cy="14" r="2.2" fill="#c7c8ee"/><circle cx="745" cy="13" r="1.8" fill="#c7c8ee"/><rect x="735" y="17" width="9" height="8" rx="2" fill="#8b8cc7"/><path d="M722.5 11 L735 9 V29 L722.5 27 Z" fill="#5b5fc7"/><text x="728.8" y="22.5" font-size="8.5" font-weight="bold" fill="#fff" text-anchor="middle">T</text><circle cx="740" cy="25" r="6" fill="#c4262e"/><text x="740" y="29" font-size="9.5" font-weight="bold" fill="#fff" text-anchor="middle">9</text>
<path d="M768 21 C768 13 777 10 782 14.5 C784 17 784.5 19.5 784 21.5 H772.5 C773 26 780 27 783.5 24.5 V27.5 C777 31 768 28.5 768 21 Z M772.6 18.6 H779.6 C779.3 14.6 773 14.6 772.6 18.6 Z" fill="#1ebbee"/><path d="M785 10.5 C781 8 772 14 767 23 C765 27 765 30 768 29" fill="none" stroke="#f0c419" stroke-width="1.3"/>
<path d="M807 17 L818 9 L829 17 V28 H807 Z" fill="#fff"/><path d="M807 17 L818 24 L829 17" fill="none" stroke="#222" stroke-width="1.2"/><circle cx="829.5" cy="26" r="7.5" fill="#3a3a3a" stroke="#bbb" stroke-width="1"/><text x="829.5" y="29.6" font-size="9.5" fill="#fff" text-anchor="middle">19</text>
<defs><linearGradient id="p3" x1="0" y1="0" x2="1" y2="1"><stop offset="0" stop-color="#2d9cff"/><stop offset="0.45" stop-color="#b44fe0"/><stop offset="0.8" stop-color="#ff4f7a"/><stop offset="1" stop-color="#ffb13b"/></linearGradient></defs><path d="M860.5 8.5 C866 8.5 869 12.5 869 16.5 C869 21 864 26 861 31 C858 26 852 21 852 16.5 C852 12.5 855 8.5 860.5 8.5 Z" fill="url(#p3)"/>
<ellipse cx="903" cy="16" rx="10" ry="6.5" fill="#f2dede" transform="rotate(-20 903 16)"/><ellipse cx="899" cy="21" rx="6" ry="3" fill="#8a7f7f"/><g fill="none" stroke="#3aa0e0" stroke-width="1.5"><circle cx="903" cy="27" r="2.5"/><circle cx="909" cy="26" r="2.5"/><path d="M904 25 L899 12 M908 24 L904 11"/></g>
<g fill="none" stroke="#eee" stroke-width="1.2"><circle cx="954.6" cy="15.3" r="2.3"/><path d="M951.5 22.5 a3.8 3.8 0 0 1 6.6 1.2"/><circle cx="948.7" cy="19.6" r="2.3"/><path d="M945 26 a3.8 3.8 0 0 1 7.4 0"/><path d="M982.5 22 L988.7 16 L995 22"/><rect x="1012.5" y="16" width="12.5" height="7.5"/><path d="M1026 18 V21.5"/><path d="M1073.2 24.5 A11 11 0 0 1 1084.2 13.5 M1076.7 24.5 A7.5 7.5 0 0 1 1084.2 17 M1080.2 24.5 A4 4 0 0 1 1084.2 20.5" transform="rotate(10 1084.2 24.5)"/><path d="M1101 17 H1104 L1108 13.5 V26.5 L1104 23 H1101 Z M1110.5 17 a3.5 3.5 0 0 1 0 6 M1113 14.5 a7 7 0 0 1 0 11 M1115.5 12.5 a10 10 0 0 1 0 15"/><path d="M1136 25 C1134 22 1139 20 1141 23 C1142 26 1146 24 1148 21 M1140 24 L1147.5 11.5 L1149.5 13 L1142 25.5 Z"/></g><path d="M1241.5 11.5 H1256.5 V23 H1246 L1243 26 V23 H1241.5 Z" fill="#fff"/><path d="M1244 14.5 H1254 M1244 17 H1254 M1244 19.5 H1250" stroke="#222" stroke-width="1"/><rect x="1013.5" y="17.2" width="8.5" height="5" fill="#eee"/><circle cx="1084" cy="24.3" r="1.5" fill="#eee"/>
<path d="M1043.2 23.6 a2.8 2.8 0 0 1 1.2 -5.4 a4.6 4.6 0 0 1 8.4 -1.6 a3.4 3.4 0 0 1 3.2 7 Z" fill="#0f78d4"/><path d="M1046.5 17.5 a4.3 4.3 0 0 1 6.3 -2.2" fill="none" stroke="#0a5fb0" stroke-width="0.8"/>
<circle cx="1255.7" cy="25.7" r="8.3" fill="#333" stroke="#aaa" stroke-width="1.2"/><text x="1255.7" y="29.6" font-size="10" font-weight="bold" fill="#fff" text-anchor="middle">32</text>
<rect x="1276" y="0" width="1" height="38" fill="#555"/>
</svg>
<svg class="abs" style="left:0;top:0;pointer-events:none;will-change:transform" width="1280" height="783">
<text x="59.13" y="28.9" font-size="21.7" fill="#ffffff" font-weight="normal" textLength="80.74" lengthAdjust="spacingAndGlyphs" stroke="#000" stroke-width="0.45">Power BI</text>
<text x="187.17" y="27.7" font-size="13.2" fill="#f0f0f0" font-weight="normal" textLength="98.56" lengthAdjust="spacingAndGlyphs">Partagé avec moi</text>
<text x="308.77" y="27.7" font-size="13.2" fill="#f0f0f0" font-weight="normal" textLength="144.76" lengthAdjust="spacingAndGlyphs">RE&amp;F Building Utilization</text>
<text x="544.27" y="27.7" font-size="13.2" fill="#f0f0f0" font-weight="normal" textLength="144.26" lengthAdjust="spacingAndGlyphs">RE&amp;F Building Utilization</text>
<text x="216.14" y="66.8" font-size="11.5" fill="#f0f0f0" font-weight="normal" textLength="32.62" lengthAdjust="spacingAndGlyphs" stroke="#f0f0f0" stroke-width="0.45">Fichier</text>
<text x="281.74" y="66.8" font-size="11.5" fill="#f0f0f0" font-weight="normal" textLength="47.42" lengthAdjust="spacingAndGlyphs" stroke="#f0f0f0" stroke-width="0.45">Affichage</text>
<text x="361.54" y="66.8" font-size="11.5" fill="#7b7b7b" font-weight="normal" textLength="94.42" lengthAdjust="spacingAndGlyphs">Modifier le rapport</text>
<text x="497.04" y="66.8" font-size="11.5" fill="#7b7b7b" font-weight="normal" textLength="14.42" lengthAdjust="spacingAndGlyphs">E...</text>
<text x="563.34" y="66.8" font-size="11.5" fill="#f0f0f0" font-weight="normal" textLength="25.12" lengthAdjust="spacingAndGlyphs" stroke="#f0f0f0" stroke-width="0.45">Act...</text>
<text x="630.84" y="66.8" font-size="11.5" fill="#7b7b7b" font-weight="normal" textLength="92.12" lengthAdjust="spacingAndGlyphs">Épingler une pag...</text>
<text x="773.34" y="66.8" font-size="11.5" fill="#f0f0f0" font-weight="normal" textLength="92.12" lengthAdjust="spacingAndGlyphs" stroke="#f0f0f0" stroke-width="0.45">Rétablir les valeu...</text>
<text x="908.54" y="66.8" font-size="11.5" fill="#f0f0f0" font-weight="normal" textLength="13.92" lengthAdjust="spacingAndGlyphs" stroke="#f0f0f0" stroke-width="0.45">S..</text>
<text x="976.14" y="66.8" font-size="11.5" fill="#f0f0f0" font-weight="normal" textLength="91.62" lengthAdjust="spacingAndGlyphs" stroke="#f0f0f0" stroke-width="0.45">Afficher les élém...</text>
<text x="1115.44" y="66.8" font-size="11.5" fill="#f0f0f0" font-weight="normal" textLength="51.52" lengthAdjust="spacingAndGlyphs" stroke="#f0f0f0" stroke-width="0.45">Retirer d...</text>
<text x="1209.94" y="66.8" font-size="11.5" fill="#f0f0f0" font-weight="normal" textLength="23.82" lengthAdjust="spacingAndGlyphs" stroke="#f0f0f0" stroke-width="0.45">S'a...</text>
<text x="44.98" y="107.7" font-size="13" fill="#f0f0f0" font-weight="normal" textLength="117.54" lengthAdjust="spacingAndGlyphs" stroke="#f0f0f0" stroke-width="0.45">Accueil (préversion)</text>
<text x="44.88" y="150.1" font-size="13" fill="#f0f0f0" font-weight="normal" textLength="41.84" lengthAdjust="spacingAndGlyphs" stroke="#f0f0f0" stroke-width="0.45">Favoris</text>
<text x="44.88" y="193.0" font-size="13" fill="#f0f0f0" font-weight="normal" textLength="40.44" lengthAdjust="spacingAndGlyphs" stroke="#f0f0f0" stroke-width="0.45">Récent</text>
<text x="44.88" y="236.9" font-size="13" fill="#f0f0f0" font-weight="normal" textLength="74.14" lengthAdjust="spacingAndGlyphs" stroke="#f0f0f0" stroke-width="0.45">Applications</text>
<text x="45.08" y="280.2" font-size="13" fill="#f0f0f0" font-weight="normal" textLength="102.84" lengthAdjust="spacingAndGlyphs" stroke="#f0f0f0" stroke-width="0.45">Partagé avec moi</text>
<text x="45.08" y="323.1" font-size="13" fill="#f0f0f0" font-weight="normal" textLength="104.84" lengthAdjust="spacingAndGlyphs" stroke="#f0f0f0" stroke-width="0.45">Espaces de travail</text>
<text x="45.08" y="365.9" font-size="13" fill="#f0f0f0" font-weight="normal" textLength="108.94" lengthAdjust="spacingAndGlyphs" stroke="#f0f0f0" stroke-width="0.45">Mon espace de t...</text>
<text x="45.08" y="729.75" font-size="13" fill="#f0f0f0" font-weight="normal" textLength="124.24" lengthAdjust="spacingAndGlyphs" stroke="#f0f0f0" stroke-width="0.45">Obtenir des données</text>
<text x="603.16" y="107.3" font-size="16" fill="#ffffff" font-weight="normal" textLength="236.28" lengthAdjust="spacingAndGlyphs">Building Programmed Headcount</text>
<text x="536.96" y="400.8" font-size="16" fill="#ffffff" font-weight="normal" textLength="372.88" lengthAdjust="spacingAndGlyphs">Peak Daily Attendance (PDA) by Occupancy Category</text>
<text x="576.36" y="698" font-size="16" fill="#ffffff" font-weight="normal" textLength="291.28" lengthAdjust="spacingAndGlyphs">Unique Badge-In by Occupancy Category</text>
<text x="259.34" y="733.9" font-size="11.5" fill="#555555" font-weight="normal" textLength="58.52" lengthAdjust="spacingAndGlyphs" stroke="#555555" stroke-width="0.45">Description</text>
<text x="355.94" y="733.9" font-size="11.5" fill="#333333" font-weight="normal" textLength="126.92" lengthAdjust="spacingAndGlyphs" stroke="#333333" stroke-width="0.45">RE&amp;F Building Utilization</text>
<text x="520.54" y="733.9" font-size="11.5" fill="#555555" font-weight="normal" textLength="195.42" lengthAdjust="spacingAndGlyphs" stroke="#555555" stroke-width="0.45">Occupancy Breakdown By BG and FH3</text>
<text x="753.24" y="733.9" font-size="11.5" fill="#555555" font-weight="normal" textLength="146.02" lengthAdjust="spacingAndGlyphs" stroke="#555555" stroke-width="0.45">Occupancy by Org Hierarchy</text>
<text x="82.78" y="769.1" font-size="12.9" fill="#444444" font-weight="normal" textLength="146.33" lengthAdjust="spacingAndGlyphs">Taper ici pour rechercher</text>
<text x="1182.04" y="760.8" font-size="11.5" fill="#ffffff" font-weight="normal" textLength="27.12" lengthAdjust="spacingAndGlyphs">16:28</text>
<text x="1167.34" y="777.7" font-size="11.5" fill="#ffffff" font-weight="normal" textLength="57.12" lengthAdjust="spacingAndGlyphs">18/01/2019</text>
<text x="0" y="0" font-size="13.4" fill="#fff" stroke="#fff" stroke-width="0.4" textLength="50.6" lengthAdjust="spacingAndGlyphs" transform="translate(1259.2 136.7) rotate(90)">FILTRES</text>
<text x="501.6" y="27" font-size="10" fill="#fff" font-weight="bold" text-anchor="middle">C</text>
</svg>
</body></html>
